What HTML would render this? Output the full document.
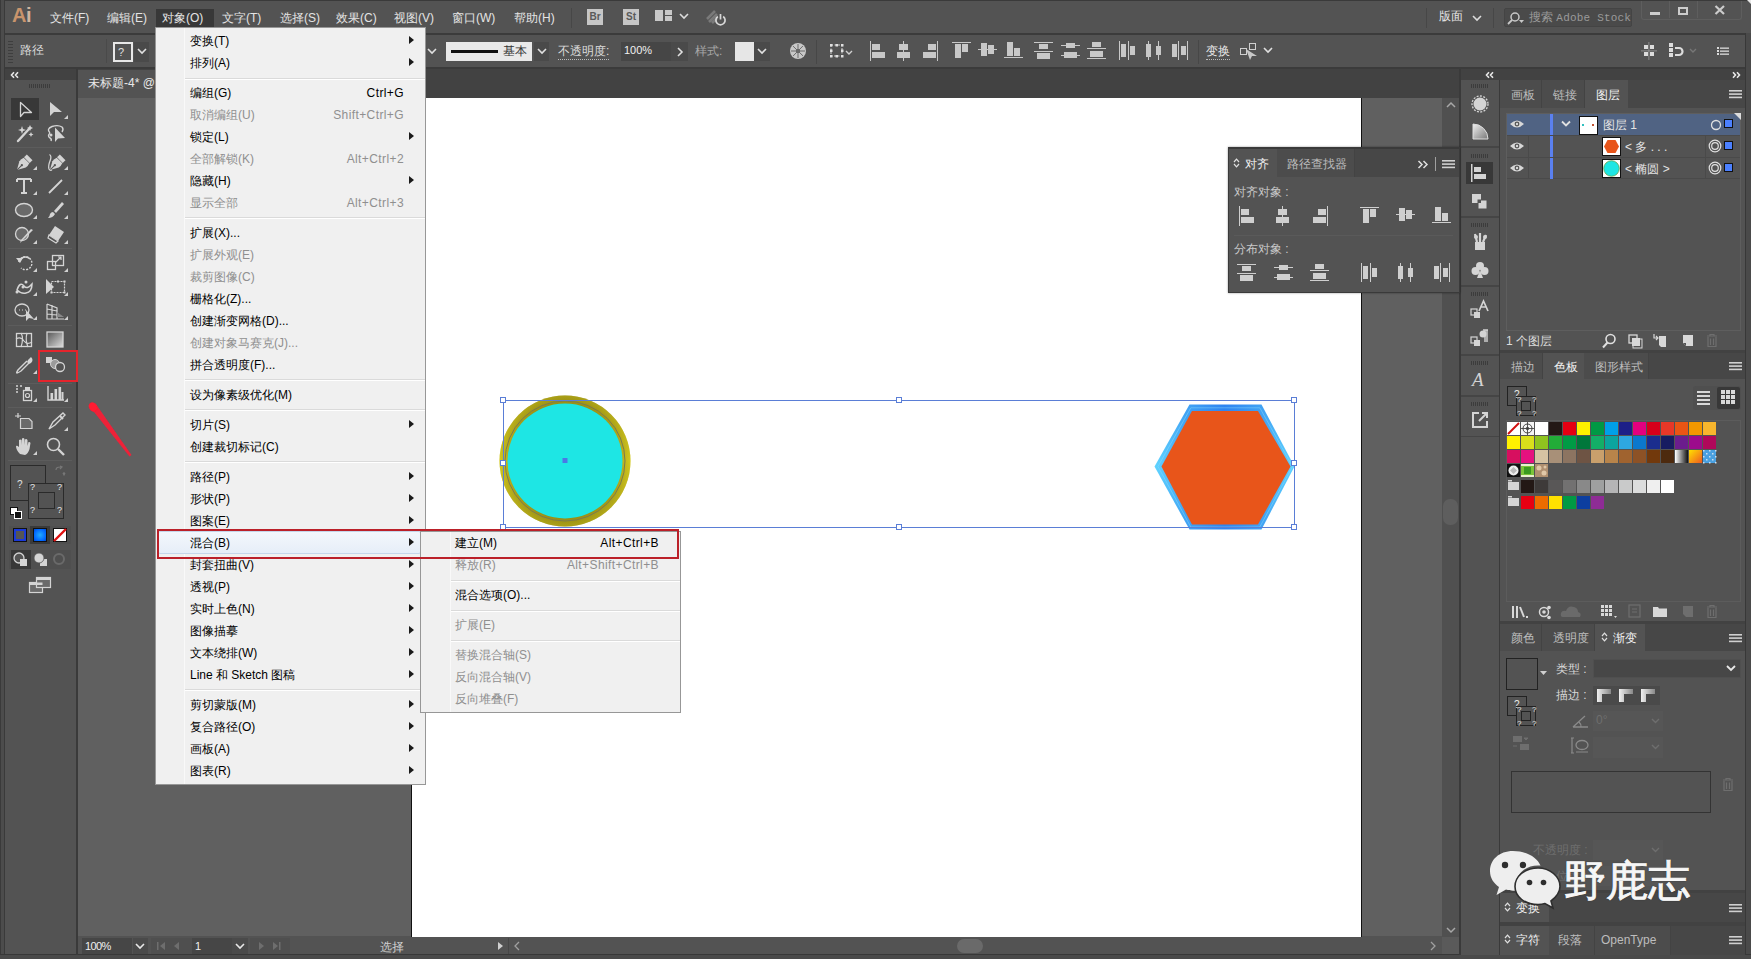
<!DOCTYPE html>
<html><head><meta charset="utf-8"><style>
*{box-sizing:border-box;margin:0;padding:0}
html,body{width:1751px;height:959px;overflow:hidden;background:#535353;font-family:"Liberation Sans",sans-serif;font-size:12px;color:#dcdcdc}
.a{position:absolute}
.t{position:absolute;white-space:nowrap;line-height:14px}
.menu{position:absolute;background:#f0f0f0;border:1px solid #979797;color:#000}
.mi{position:absolute;left:34px;height:22px;line-height:22px;font-size:12px;white-space:nowrap;color:#000}
.dis{color:#8f8f8f}
.sc{position:absolute;text-align:right;height:22px;line-height:22px;white-space:nowrap;letter-spacing:0.4px}
.arr{position:absolute;width:0;height:0;border-top:4px solid transparent;border-bottom:4px solid transparent;border-left:5px solid #1a1a1a}
.sep{position:absolute;height:2px;border-top:1px solid #dadada;border-bottom:1px solid #fff}
svg{position:absolute;overflow:visible}
svg.ud{position:relative;display:inline-block;vertical-align:0px;margin-right:5px}

</style></head><body>
<div class="a" style="left:0px;top:0px;width:1751px;height:959px;background:#535353;"></div>
<div class="a" style="left:0px;top:0px;width:1751px;height:1px;background:#3a3a3a;"></div>
<div class="a" style="left:0px;top:33px;width:1751px;height:2px;background:#3b3b3b;"></div>
<div class="a" style="left:0px;top:67px;width:1751px;height:2px;background:#3b3b3b;"></div>
<div class="a" style="left:0px;top:0px;width:5px;height:959px;background:#4c4c4c;border-left:1px solid #3a3a3a;border-right:1px solid #3a3a3a"></div>
<div class="a" style="left:1745px;top:33px;width:1px;height:922px;background:#383838;"></div>
<div class="a" style="left:1746px;top:33px;width:5px;height:922px;background:#4a4a4a;"></div>
<div class="a" style="left:0px;top:954px;width:1751px;height:1px;background:#383838;"></div>
<div class="a" style="left:0px;top:955px;width:1751px;height:4px;background:#4a4a4a;"></div>
<div class="a" style="left:78px;top:69px;width:1381px;height:29px;background:#424242;"></div>
<div class="a" style="left:78px;top:98px;width:1364px;height:838px;background:#606060;"></div>
<div class="a" style="left:411px;top:98px;width:951px;height:839px;background:#ffffff;border-left:1px solid #111;border-right:1px solid #111"></div>
<div class="a" style="left:1442px;top:98px;width:17px;height:839px;background:#505050;"></div>
<div class="a" style="left:78px;top:937px;width:1381px;height:17px;background:#535353;"></div>
<div class="a" style="left:5px;top:69px;width:71px;height:11px;background:#424242;"></div>
<div class="a" style="left:76px;top:69px;width:2px;height:886px;background:#3a3a3a;"></div>
<div class="a" style="left:1459px;top:69px;width:2px;height:886px;background:#3a3a3a;"></div>
<div class="a" style="left:1461px;top:69px;width:284px;height:11px;background:#424242;"></div>
<div class="a" style="left:1499px;top:80px;width:1px;height:875px;background:#3a3a3a;"></div>
<div class="t" style="left:12px;top:9px;font-size:20px;color:#c8946c;line-height:20px;top:5px;letter-spacing:-0.5px"><b>A</b><b style="color:#d0b4a0">i</b></div>
<div class="a" style="left:156px;top:9px;width:58px;height:18px;background:#383838;"></div>
<div class="t" style="left:50px;top:11px;font-size:12px;color:#e4e4e4;">文件(F)</div>
<div class="t" style="left:107px;top:11px;font-size:12px;color:#e4e4e4;">编辑(E)</div>
<div class="t" style="left:162px;top:11px;font-size:12px;color:#e4e4e4;">对象(O)</div>
<div class="t" style="left:222px;top:11px;font-size:12px;color:#e4e4e4;">文字(T)</div>
<div class="t" style="left:280px;top:11px;font-size:12px;color:#e4e4e4;">选择(S)</div>
<div class="t" style="left:336px;top:11px;font-size:12px;color:#e4e4e4;">效果(C)</div>
<div class="t" style="left:394px;top:11px;font-size:12px;color:#e4e4e4;">视图(V)</div>
<div class="t" style="left:452px;top:11px;font-size:12px;color:#e4e4e4;">窗口(W)</div>
<div class="t" style="left:514px;top:11px;font-size:12px;color:#e4e4e4;">帮助(H)</div>
<div class="a" style="left:571px;top:8px;width:1px;height:20px;background:#474747;"></div>
<div class="a" style="left:587px;top:9px;width:16px;height:16px;background:#c6c6c6;"></div>
<div class="t" style="left:587px;top:10px;font-size:10px;color:#5a5a5a;width:16px;text-align:center"><b>Br</b></div>
<div class="a" style="left:623px;top:9px;width:16px;height:16px;background:#c6c6c6;"></div>
<div class="t" style="left:623px;top:10px;font-size:10px;color:#5a5a5a;width:16px;text-align:center"><b>St</b></div>
<div class="a" style="left:655px;top:10px;width:8px;height:11px;background:#c8c8c8;"></div>
<div class="a" style="left:665px;top:10px;width:7px;height:5px;background:#c8c8c8;"></div>
<div class="a" style="left:665px;top:16px;width:7px;height:5px;background:#c8c8c8;"></div>
<svg style="left:679px;top:13px;" width="10" height="6" viewBox="0 0 10 6"><path d="M1 1 L5 5 L9 1" stroke="#dcdcdc" stroke-width="1.6" fill="none"/></svg>
<svg style="left:704px;top:7px;" width="24" height="20" viewBox="0 0 24 20"><path d="M3 12 L11 4 M5 15 L13 7 M8 16 L13 11" stroke="#7a7a7a" stroke-width="2.6" fill="none"/><path d="M13.8 9.5 A4.6 4.6 0 1 0 19.2 9.5" stroke="#d8d8d8" stroke-width="1.7" fill="none"/><path d="M16.5 7 V12.5" stroke="#d8d8d8" stroke-width="1.7"/></svg>
<div class="a" style="left:1426px;top:8px;width:1px;height:20px;background:#474747;"></div>
<div class="t" style="left:1439px;top:9px;font-size:12px;color:#e4e4e4;">版面</div>
<svg style="left:1472px;top:15px;" width="10" height="6" viewBox="0 0 10 6"><path d="M1 1 L5 5 L9 1" stroke="#dcdcdc" stroke-width="1.6" fill="none"/></svg>
<div class="a" style="left:1493px;top:8px;width:1px;height:20px;background:#474747;"></div>
<div class="a" style="left:1504px;top:8px;width:128px;height:19px;background:#4a4a4a;border:1px solid #444;border-radius:2px"></div>
<svg style="left:1507px;top:11px;" width="18" height="14" viewBox="0 0 18 14"><circle cx="8" cy="6" r="4" stroke="#c8c8c8" stroke-width="1.5" fill="none"/><path d="M5 9 L1 13" stroke="#c8c8c8" stroke-width="1.8"/><path d="M12 9 h5 l-2.5 3z" fill="#c8c8c8"/></svg>
<div class="t" style="left:1529px;top:10px;font-size:12px;color:#9a9a9a;">搜索 <span style="font-family:Liberation Mono;font-size:11px;letter-spacing:0.2px">Adobe Stock</span></div>
<div class="a" style="left:1641px;top:1px;width:101px;height:19px;background:#535353;border:1px solid #5e5e5e;border-top:none;border-radius:0 0 3px 3px"></div>
<div class="a" style="left:1669px;top:1px;width:1px;height:17px;background:#5e5e5e;"></div>
<div class="a" style="left:1697px;top:1px;width:1px;height:17px;background:#5e5e5e;"></div>
<div class="a" style="left:1650px;top:12px;width:10px;height:3px;background:#cccccc;"></div>
<div class="a" style="left:1678px;top:7px;width:10px;height:8px;background:transparent;border:2px solid #cccccc;border-top-width:2px"></div>
<svg style="left:1714px;top:4px;" width="12" height="11" viewBox="0 0 12 11"><path d="M1.5 2 L10 10 M10 2 L1.5 10" stroke="#cccccc" stroke-width="2.2"/></svg>
<svg style="left:1746px;top:0px;" width="5" height="5" viewBox="0 0 5 5"><path d="M1 0 H5 V4Z" fill="#e8e8e8"/></svg>
<svg style="left:8px;top:41px;" width="6" height="22" viewBox="0 0 6 22"><rect x="0" y="0" width="5" height="1" fill="#3e3e3e"/><rect x="0" y="3" width="5" height="1" fill="#3e3e3e"/><rect x="0" y="6" width="5" height="1" fill="#3e3e3e"/><rect x="0" y="9" width="5" height="1" fill="#3e3e3e"/><rect x="0" y="12" width="5" height="1" fill="#3e3e3e"/><rect x="0" y="15" width="5" height="1" fill="#3e3e3e"/><rect x="0" y="18" width="5" height="1" fill="#3e3e3e"/><rect x="0" y="21" width="5" height="1" fill="#3e3e3e"/></svg>
<div class="t" style="left:20px;top:43px;font-size:12px;color:#d8d8d8;">路径</div>
<div class="a" style="left:106px;top:39px;width:1px;height:24px;background:#4a4a4a;"></div>
<div class="a" style="left:113px;top:42px;width:20px;height:20px;background:#535353;border:2px solid #e8e8e8"></div>
<div class="t" style="left:118px;top:45px;font-size:11px;color:#e0e0e0;">?</div>
<div class="a" style="left:134px;top:42px;width:15px;height:20px;background:#4a4a4a;"></div>
<svg style="left:137px;top:48px;" width="10" height="6" viewBox="0 0 10 6"><path d="M1 1 L5 5 L9 1" stroke="#e0e0e0" stroke-width="1.6" fill="none"/></svg>
<svg style="left:427px;top:48px;" width="10" height="6" viewBox="0 0 10 6"><path d="M1 1 L5 5 L9 1" stroke="#e0e0e0" stroke-width="1.6" fill="none"/></svg>
<div class="a" style="left:446px;top:42px;width:86px;height:19px;background:#e9e9e9;"></div>
<div class="a" style="left:451px;top:50px;width:47px;height:3px;background:#111;"></div>
<div class="t" style="left:503px;top:44px;font-size:12px;color:#333;">基本</div>
<div class="a" style="left:534px;top:42px;width:15px;height:19px;background:#4a4a4a;"></div>
<svg style="left:537px;top:48px;" width="10" height="6" viewBox="0 0 10 6"><path d="M1 1 L5 5 L9 1" stroke="#e0e0e0" stroke-width="1.6" fill="none"/></svg>
<div class="t" style="left:558px;top:44px;font-size:12px;color:#dcdcdc;border-bottom:1px dotted #bbb;line-height:15px">不透明度:</div>
<div class="a" style="left:621px;top:42px;width:50px;height:19px;background:#464646;"></div>
<div class="t" style="left:624px;top:43px;font-size:11px;color:#f0f0f0;">100%</div>
<div class="a" style="left:671px;top:42px;width:17px;height:19px;background:#4a4a4a;"></div>
<svg style="left:676px;top:47px;" width="8" height="10" viewBox="0 0 8 10"><path d="M2 1 L6 5 L2 9" stroke="#e0e0e0" stroke-width="1.6" fill="none"/></svg>
<div class="t" style="left:695px;top:44px;font-size:12px;color:#a8a8a8;">样式:</div>
<div class="a" style="left:735px;top:42px;width:19px;height:19px;background:#e6e6e6;"></div>
<div class="a" style="left:754px;top:42px;width:16px;height:19px;background:#4a4a4a;"></div>
<svg style="left:757px;top:48px;" width="10" height="6" viewBox="0 0 10 6"><path d="M1 1 L5 5 L9 1" stroke="#e0e0e0" stroke-width="1.6" fill="none"/></svg>
<svg style="left:789px;top:42px;" width="18" height="18" viewBox="0 0 18 18"><circle cx="9" cy="9" r="8" fill="#c8c8c8"/><circle cx="9" cy="9" r="2" fill="#535353"/><path d="M9 9 L16.0 9.0" stroke="#6a6a6a" stroke-width="1"/><path d="M9 9 L14.0 13.9" stroke="#6a6a6a" stroke-width="1"/><path d="M9 9 L9.0 16.0" stroke="#6a6a6a" stroke-width="1"/><path d="M9 9 L4.1 14.0" stroke="#6a6a6a" stroke-width="1"/><path d="M9 9 L2.0 9.0" stroke="#6a6a6a" stroke-width="1"/><path d="M9 9 L4.0 4.1" stroke="#6a6a6a" stroke-width="1"/><path d="M9 9 L9.0 2.0" stroke="#6a6a6a" stroke-width="1"/><path d="M9 9 L13.9 4.0" stroke="#6a6a6a" stroke-width="1"/></svg>
<div class="a" style="left:816px;top:40px;width:1px;height:24px;background:#474747;"></div>
<svg style="left:829px;top:43px;" width="26" height="16" viewBox="0 0 26 16"><rect x="2" y="2" width="11" height="11" stroke="#d0d0d0" stroke-dasharray="2 1.5" fill="none"/><rect x="1" y="1" width="2.5" height="2.5" fill="#e0e0e0"/><rect x="1" y="6.5" width="2.5" height="2.5" fill="#e0e0e0"/><rect x="1" y="12" width="2.5" height="2.5" fill="#e0e0e0"/><rect x="6.5" y="1" width="2.5" height="2.5" fill="#e0e0e0"/><rect x="6.5" y="12" width="2.5" height="2.5" fill="#e0e0e0"/><rect x="12" y="1" width="2.5" height="2.5" fill="#e0e0e0"/><rect x="12" y="6.5" width="2.5" height="2.5" fill="#e0e0e0"/><rect x="12" y="12" width="2.5" height="2.5" fill="#e0e0e0"/><path d="M17 8 L20 11 L23 8" stroke="#d0d0d0" stroke-width="1.4" fill="none"/></svg>
<svg style="left:869px;top:41px;" width="20" height="20" viewBox="0 0 20 20"><rect x="1" y="0" width="1" height="20" fill="#c8c8c8"/><rect x="3" y="3" width="8" height="6" fill="#c8c8c8"/><rect x="3" y="11" width="13" height="6" fill="#c8c8c8"/></svg>
<svg style="left:894px;top:41px;" width="20" height="20" viewBox="0 0 20 20"><rect x="9" y="0" width="1" height="20" fill="#c8c8c8"/><rect x="5" y="3" width="9" height="6" fill="#c8c8c8"/><rect x="3" y="11" width="13" height="6" fill="#c8c8c8"/></svg>
<svg style="left:920px;top:41px;" width="20" height="20" viewBox="0 0 20 20"><rect x="17" y="0" width="1" height="20" fill="#c8c8c8"/><rect x="8" y="3" width="8" height="6" fill="#c8c8c8"/><rect x="3" y="11" width="13" height="6" fill="#c8c8c8"/></svg>
<svg style="left:952px;top:41px;" width="20" height="20" viewBox="0 0 20 20"><rect x="0" y="1" width="19" height="1" fill="#c8c8c8"/><rect x="3" y="3" width="6" height="14" fill="#c8c8c8"/><rect x="10" y="3" width="6" height="8" fill="#c8c8c8"/></svg>
<svg style="left:978px;top:41px;" width="20" height="20" viewBox="0 0 20 20"><rect x="0" y="8" width="19" height="1" fill="#c8c8c8"/><rect x="3" y="2" width="6" height="13" fill="#c8c8c8"/><rect x="10" y="4" width="6" height="9" fill="#c8c8c8"/></svg>
<svg style="left:1004px;top:41px;" width="20" height="20" viewBox="0 0 20 20"><rect x="0" y="16" width="19" height="1" fill="#c8c8c8"/><rect x="3" y="1" width="6" height="14" fill="#c8c8c8"/><rect x="10" y="7" width="6" height="8" fill="#c8c8c8"/></svg>
<svg style="left:1034px;top:41px;" width="20" height="20" viewBox="0 0 20 20"><rect x="0" y="1" width="19" height="1" fill="#c8c8c8"/><rect x="0" y="10" width="19" height="1" fill="#c8c8c8"/><rect x="5" y="3" width="9" height="5" fill="#c8c8c8"/><rect x="3" y="12" width="13" height="6" fill="#c8c8c8"/></svg>
<svg style="left:1061px;top:41px;" width="20" height="20" viewBox="0 0 20 20"><rect x="0" y="4" width="19" height="1" fill="#c8c8c8"/><rect x="0" y="14" width="19" height="1" fill="#c8c8c8"/><rect x="5" y="2" width="9" height="5" fill="#c8c8c8"/><rect x="3" y="11" width="13" height="6" fill="#c8c8c8"/></svg>
<svg style="left:1087px;top:41px;" width="20" height="20" viewBox="0 0 20 20"><rect x="0" y="7" width="19" height="1" fill="#c8c8c8"/><rect x="0" y="17" width="19" height="1" fill="#c8c8c8"/><rect x="5" y="1" width="9" height="5" fill="#c8c8c8"/><rect x="3" y="10" width="13" height="6" fill="#c8c8c8"/></svg>
<svg style="left:1118px;top:41px;" width="20" height="20" viewBox="0 0 20 20"><rect x="1" y="0" width="1" height="19" fill="#c8c8c8"/><rect x="10" y="0" width="1" height="19" fill="#c8c8c8"/><rect x="3" y="3" width="5" height="13" fill="#c8c8c8"/><rect x="12" y="5" width="5" height="9" fill="#c8c8c8"/></svg>
<svg style="left:1144px;top:41px;" width="20" height="20" viewBox="0 0 20 20"><rect x="4" y="0" width="1" height="19" fill="#c8c8c8"/><rect x="14" y="0" width="1" height="19" fill="#c8c8c8"/><rect x="2" y="3" width="5" height="13" fill="#c8c8c8"/><rect x="12" y="5" width="5" height="9" fill="#c8c8c8"/></svg>
<svg style="left:1170px;top:41px;" width="20" height="20" viewBox="0 0 20 20"><rect x="8" y="0" width="1" height="19" fill="#c8c8c8"/><rect x="17" y="0" width="1" height="19" fill="#c8c8c8"/><rect x="2" y="3" width="5" height="13" fill="#c8c8c8"/><rect x="11" y="5" width="5" height="9" fill="#c8c8c8"/></svg>
<div class="a" style="left:1198px;top:40px;width:1px;height:24px;background:#474747;"></div>
<div class="t" style="left:1206px;top:44px;font-size:12px;color:#e8e8e8;border-bottom:1px dotted #bbb;line-height:15px">变换</div>
<svg style="left:1239px;top:42px;" width="22" height="18" viewBox="0 0 22 18"><rect x="1.5" y="6.5" width="6" height="6" stroke="#d0d0d0" fill="none"/><rect x="10.5" y="1.5" width="6" height="6" stroke="#d0d0d0" fill="none"/><path d="M7 7 L18 14 L13 14 L11 18 Z" fill="#c8c8c8"/></svg>
<svg style="left:1263px;top:47px;" width="10" height="6" viewBox="0 0 10 6"><path d="M1 1 L5 5 L9 1" stroke="#e0e0e0" stroke-width="1.6" fill="none"/></svg>
<svg style="left:1641px;top:42px;" width="16" height="18" viewBox="0 0 16 18"><rect x="7.5" y="0" width="0.8" height="18" fill="#9a9a9a"/><rect x="0" y="8.5" width="16" height="0.8" fill="#9a9a9a"/><rect x="3" y="3" width="4" height="4" fill="#dcdcdc"/><rect x="9" y="3" width="4" height="4" fill="#dcdcdc"/><rect x="3" y="10" width="4" height="4" fill="#dcdcdc"/><rect x="9" y="10" width="4" height="4" fill="#dcdcdc"/></svg>
<svg style="left:1668px;top:43px;" width="18" height="16" viewBox="0 0 18 16"><rect x="1" y="0" width="4" height="4" fill="#dcdcdc"/><rect x="1" y="5" width="4" height="4" fill="#dcdcdc"/><rect x="1" y="10" width="4" height="4" fill="#dcdcdc"/><path d="M7 5 H11 A3.5 3.5 0 0 1 11 12 H7" stroke="#dcdcdc" stroke-width="2.2" fill="none"/></svg>
<svg style="left:1689px;top:48px;" width="8" height="6" viewBox="0 0 8 6"><path d="M1 1 L4 4 L7 1" stroke="#777" stroke-width="1.4" fill="none"/></svg>
<svg style="left:1717px;top:46px;" width="13" height="10" viewBox="0 0 13 10"><rect x="0" y="1" width="2" height="2" fill="#dcdcdc"/><rect x="3" y="1.5" width="9" height="1.3" fill="#dcdcdc"/><rect x="0" y="4" width="2" height="2" fill="#dcdcdc"/><rect x="3" y="4.5" width="9" height="1.3" fill="#dcdcdc"/><rect x="0" y="7" width="2" height="2" fill="#dcdcdc"/><rect x="3" y="7.5" width="9" height="1.3" fill="#dcdcdc"/></svg>
<div class="a" style="left:78px;top:69px;width:1381px;height:29px;background:#424242;"></div>
<div class="a" style="left:78px;top:70px;width:300px;height:28px;background:#535353;"></div>
<div class="t" style="left:88px;top:76px;font-size:12px;color:#e8e8e8;">未标题-4* @ 100% (RGB/GPU 预览)</div>
<svg style="left:490px;top:385px;" width="160" height="160" viewBox="0 0 160 160">
<defs>
<linearGradient id="ring" x1="0" y1="0" x2="0" y2="1">
<stop offset="0" stop-color="#857a12"/><stop offset="0.5" stop-color="#cfc520"/><stop offset="1" stop-color="#857a12"/></linearGradient>
<radialGradient id="ring2" cx="0.5" cy="0.5" r="0.5">
<stop offset="0.86" stop-color="#a09214"/><stop offset="1" stop-color="#d8cf1e"/></radialGradient>
</defs>
<circle cx="75" cy="76" r="65.5" fill="url(#ring)"/>
<circle cx="75" cy="76" r="65.5" fill="url(#ring2)" opacity="0.45"/>
<circle cx="75" cy="76" r="60" fill="none" stroke="#7a7a50" stroke-width="1"/>
<circle cx="75" cy="76" r="57.5" fill="#1ee6e4"/>
<rect x="72.5" y="73" width="5" height="5" fill="#4a78e6"/>
</svg>
<svg style="left:1145px;top:390px;" width="160" height="150" viewBox="0 0 160 150">
<defs><linearGradient id="hx" x1="0" y1="0" x2="1" y2="0">
<stop offset="0" stop-color="#60d4ff"/><stop offset="0.22" stop-color="#42a4f4"/><stop offset="0.5" stop-color="#2f84f0"/><stop offset="0.78" stop-color="#42a4f4"/><stop offset="1" stop-color="#60d4ff"/></linearGradient></defs>
<polygon points="9.5,76.5 44.5,14.5 116.5,14.5 149.5,76.5 116.5,139.5 44.5,139.5" fill="url(#hx)"/>
<polygon points="16.5,76.5 47,21 113,21 145.5,76.5 113,134.5 47,134.5" fill="#e8551a"/><polygon points="13,76.5 45.8,17.8 114.8,17.8 147.5,76.5 114.8,137 45.8,137" fill="none" stroke="#8ee0ff" stroke-width="0.8" opacity="0.55"/>
</svg>
<div class="a" style="left:503px;top:400px;width:792px;height:128px;border:1px solid #5a7ed6"></div>
<div class="a" style="left:500px;top:397px;width:6px;height:6px;background:#fff;border:1px solid #5a7ed6"></div>
<div class="a" style="left:500px;top:460px;width:6px;height:6px;background:#fff;border:1px solid #5a7ed6"></div>
<div class="a" style="left:500px;top:524px;width:6px;height:6px;background:#fff;border:1px solid #5a7ed6"></div>
<div class="a" style="left:896px;top:397px;width:6px;height:6px;background:#fff;border:1px solid #5a7ed6"></div>
<div class="a" style="left:896px;top:524px;width:6px;height:6px;background:#fff;border:1px solid #5a7ed6"></div>
<div class="a" style="left:1291px;top:397px;width:6px;height:6px;background:#fff;border:1px solid #5a7ed6"></div>
<div class="a" style="left:1291px;top:460px;width:6px;height:6px;background:#fff;border:1px solid #5a7ed6"></div>
<div class="a" style="left:1291px;top:524px;width:6px;height:6px;background:#fff;border:1px solid #5a7ed6"></div>
<svg style="left:1445px;top:100px;" width="12" height="10" viewBox="0 0 12 10"><path d="M2 7 L6 3 L10 7" stroke="#a8a8a8" stroke-width="1.5" fill="none"/></svg>
<svg style="left:1445px;top:925px;" width="12" height="10" viewBox="0 0 12 10"><path d="M2 3 L6 7 L10 3" stroke="#a8a8a8" stroke-width="1.5" fill="none"/></svg>
<div class="a" style="left:1443px;top:499px;width:15px;height:26px;background:#5e5e5e;border-radius:7px"></div>
<div class="a" style="left:1442px;top:937px;width:17px;height:17px;background:#5a5a5a;"></div>
<div class="a" style="left:78px;top:937px;width:1364px;height:17px;background:#535353;"></div>
<div class="a" style="left:82px;top:938px;width:50px;height:16px;background:#464646;"></div>
<div class="t" style="left:85px;top:939px;font-size:11px;color:#f0f0f0;letter-spacing:-0.6px">100%</div>
<div class="a" style="left:133px;top:938px;width:15px;height:16px;background:#4a4a4a;"></div>
<svg style="left:135px;top:943px;" width="10" height="6" viewBox="0 0 10 6"><path d="M1 1 L5 5 L9 1" stroke="#e8e8e8" stroke-width="1.6" fill="none"/></svg>
<div class="a" style="left:151px;top:938px;width:41px;height:16px;background:#4f4f4f;"></div>
<svg style="left:157px;top:941px;" width="30" height="10" viewBox="0 0 30 10"><rect x="0" y="1" width="1.5" height="8" fill="#6e6e6e"/><path d="M8 1 L3 5 L8 9Z" fill="#6e6e6e"/><path d="M22 1 L17 5 L22 9Z" fill="#6e6e6e"/></svg>
<div class="a" style="left:192px;top:938px;width:40px;height:16px;background:#464646;"></div>
<div class="t" style="left:195px;top:939px;font-size:11px;color:#f0f0f0;">1</div>
<div class="a" style="left:232px;top:938px;width:16px;height:16px;background:#4a4a4a;"></div>
<svg style="left:235px;top:943px;" width="10" height="6" viewBox="0 0 10 6"><path d="M1 1 L5 5 L9 1" stroke="#e8e8e8" stroke-width="1.6" fill="none"/></svg>
<div class="a" style="left:250px;top:938px;width:40px;height:16px;background:#4f4f4f;"></div>
<svg style="left:257px;top:941px;" width="30" height="10" viewBox="0 0 30 10"><path d="M2 1 L7 5 L2 9Z" fill="#6e6e6e"/><path d="M16 1 L21 5 L16 9Z" fill="#6e6e6e"/><rect x="22" y="1" width="1.5" height="8" fill="#6e6e6e"/></svg>
<div class="t" style="left:380px;top:940px;font-size:12px;color:#d0d0d0;">选择</div>
<svg style="left:497px;top:941px;" width="8" height="10" viewBox="0 0 8 10"><path d="M1 1 L6 5 L1 9Z" fill="#d0d0d0"/></svg>
<div class="a" style="left:508px;top:938px;width:1px;height:16px;background:#474747;"></div>
<svg style="left:513px;top:941px;" width="8" height="10" viewBox="0 0 8 10"><path d="M6 1 L2 5 L6 9" stroke="#a0a0a0" stroke-width="1.3" fill="none"/></svg>
<div class="a" style="left:957px;top:939px;width:26px;height:14px;background:#6a6a6a;border-radius:7px"></div>
<svg style="left:1429px;top:941px;" width="8" height="10" viewBox="0 0 8 10"><path d="M2 1 L6 5 L2 9" stroke="#a0a0a0" stroke-width="1.3" fill="none"/></svg>
<svg style="left:10px;top:71px;" width="9" height="8" viewBox="0 0 9 8"><path d="M4 1.2 L1.5 4 L4 6.8 M8 1.2 L5.5 4 L8 6.8" stroke="#e8e8e8" stroke-width="1.6" fill="none"/></svg>
<svg style="left:29px;top:84px;" width="22" height="4" viewBox="0 0 22 4"><rect x="0" y="0" width="1" height="4" fill="#3c3c3c"/><rect x="2" y="0" width="1" height="4" fill="#3c3c3c"/><rect x="4" y="0" width="1" height="4" fill="#3c3c3c"/><rect x="6" y="0" width="1" height="4" fill="#3c3c3c"/><rect x="8" y="0" width="1" height="4" fill="#3c3c3c"/><rect x="10" y="0" width="1" height="4" fill="#3c3c3c"/><rect x="12" y="0" width="1" height="4" fill="#3c3c3c"/><rect x="14" y="0" width="1" height="4" fill="#3c3c3c"/><rect x="16" y="0" width="1" height="4" fill="#3c3c3c"/><rect x="18" y="0" width="1" height="4" fill="#3c3c3c"/><rect x="20" y="0" width="1" height="4" fill="#3c3c3c"/></svg>
<div class="a" style="left:11px;top:98px;width:28px;height:22px;background:#383838;"></div>
<svg style="left:18px;top:101px;" width="16" height="18" viewBox="0 0 16 18"><path d="M2.5 1.5 L2.5 15.5 L6 11.5 L13.5 11.5Z" stroke="#d4d4d4" stroke-width="1.3" fill="none" stroke-linejoin="round"/></svg>
<svg style="left:48px;top:101px;" width="18" height="18" viewBox="0 0 18 18"><path d="M2 1 L2 15 L6 11 L14 11Z" fill="#d4d4d4"/></svg>
<svg style="left:64px;top:115px;" width="5" height="5" viewBox="0 0 5 5"><path d="M4 0 L4 4 L0 4Z" fill="#d0d0d0"/></svg>
<svg style="left:14px;top:124px;" width="22" height="20" viewBox="0 0 22 20"><path d="M4 17 L15 5" stroke="#d4d4d4" stroke-width="2.4" stroke-linecap="round"/><path d="M8 2 L9 5 L12 6 L9 7 L8 10 L7 7 L4 6 L7 5Z M16 1 L17 3 L19 4 L17 5 L16 7 L15 5 L13 4 L15 3Z M17 8 L17.8 9.7 L19.5 10.5 L17.8 11.3 L17 13 L16.2 11.3 L14.5 10.5 L16.2 9.7Z" fill="#d4d4d4"/></svg>
<svg style="left:45px;top:124px;" width="22" height="20" viewBox="0 0 22 20"><path d="M5 9 Q1 5 7 2.5 Q13 0.5 17 3 Q19 5 17 8" stroke="#d4d4d4" stroke-width="1.4" fill="none"/><path d="M5 9 Q2 12 5 14 Q7 15 6 17" stroke="#d4d4d4" stroke-width="1.4" fill="none"/><circle cx="6" cy="11" r="1.5" fill="#d4d4d4"/><path d="M10 3.5 L10 18 L13 14.5 L20 14Z" fill="#d4d4d4"/></svg>
<div class="a" style="left:8px;top:147px;width:64px;height:1px;background:#4a4a4a;border-bottom:1px solid #5c5c5c"></div>
<svg style="left:13px;top:153px;" width="22" height="22" viewBox="0 0 22 22"><g transform="translate(11 10) rotate(45)"><path d="M0 10 L-4.5 2 Q-5 -1 -4 -3.5 L4 -3.5 Q5 -1 4.5 2Z" fill="#d4d4d4"/><rect x="-4" y="-8" width="8" height="4" fill="#d4d4d4"/><path d="M0 10 L0 3" stroke="#535353" stroke-width="1"/><circle cx="0" cy="3" r="1.1" fill="#535353"/></g></svg>
<svg style="left:33px;top:166px;" width="5" height="5" viewBox="0 0 5 5"><path d="M4 0 L4 4 L0 4Z" fill="#d0d0d0"/></svg>
<svg style="left:44px;top:153px;" width="22" height="22" viewBox="0 0 22 22"><g transform="translate(13 10) rotate(45)"><path d="M0 10 L-4.5 2 Q-5 -1 -4 -3.5 L4 -3.5 Q5 -1 4.5 2Z" fill="#d4d4d4"/><rect x="-4" y="-8" width="8" height="4" fill="#d4d4d4"/><path d="M0 10 L0 3" stroke="#535353" stroke-width="1"/><circle cx="0" cy="3" r="1.1" fill="#535353"/></g><path d="M5.5 1.5 Q8 3 6 8 Q4 13 5 16 Q6 18 8 17" stroke="#d4d4d4" stroke-width="1.3" fill="none"/></svg>
<svg style="left:64px;top:166px;" width="5" height="5" viewBox="0 0 5 5"><path d="M4 0 L4 4 L0 4Z" fill="#d0d0d0"/></svg>
<svg style="left:15px;top:177px;" width="20" height="18" viewBox="0 0 20 18"><path d="M2 2 H16 M9 2 V16 M6 16 H12 M2 2 V5 M16 2 V5" stroke="#d4d4d4" stroke-width="2" fill="none"/></svg>
<svg style="left:33px;top:191px;" width="5" height="5" viewBox="0 0 5 5"><path d="M4 0 L4 4 L0 4Z" fill="#d0d0d0"/></svg>
<svg style="left:46px;top:177px;" width="20" height="18" viewBox="0 0 20 18"><path d="M3 16 L16 3" stroke="#d4d4d4" stroke-width="1.8"/></svg>
<svg style="left:64px;top:191px;" width="5" height="5" viewBox="0 0 5 5"><path d="M4 0 L4 4 L0 4Z" fill="#d0d0d0"/></svg>
<svg style="left:14px;top:201px;" width="22" height="18" viewBox="0 0 22 18"><ellipse cx="10" cy="9" rx="8.5" ry="6.5" fill="#6a6a6a" stroke="#d4d4d4" stroke-width="1.4"/></svg>
<svg style="left:33px;top:215px;" width="5" height="5" viewBox="0 0 5 5"><path d="M4 0 L4 4 L0 4Z" fill="#d0d0d0"/></svg>
<svg style="left:45px;top:201px;" width="22" height="18" viewBox="0 0 22 18"><path d="M17 1 L19 3 L11 12 L9 10Z" fill="#d4d4d4"/><path d="M8 11 L10 13 Q8 17 3 17 Q5 15 5 13 Q6 11 8 11Z" fill="#d4d4d4"/></svg>
<svg style="left:64px;top:215px;" width="5" height="5" viewBox="0 0 5 5"><path d="M4 0 L4 4 L0 4Z" fill="#d0d0d0"/></svg>
<svg style="left:14px;top:225px;" width="22" height="20" viewBox="0 0 22 20"><circle cx="8" cy="9" r="6.5" fill="#6a6a6a" stroke="#d4d4d4" stroke-width="1.3"/><path d="M19 5 L8 16 L6 18 L7 15 L17 4Z" fill="#d4d4d4"/></svg>
<svg style="left:33px;top:240px;" width="5" height="5" viewBox="0 0 5 5"><path d="M4 0 L4 4 L0 4Z" fill="#d0d0d0"/></svg>
<svg style="left:45px;top:224px;" width="22" height="20" viewBox="0 0 22 20"><path d="M10 2 L19 8 L13 17 L4 11Z" fill="#d4d4d4"/><path d="M4 11 L13 17 L11 19 L3 14Z" fill="#535353" stroke="#d4d4d4" stroke-width="1.2"/></svg>
<svg style="left:64px;top:240px;" width="5" height="5" viewBox="0 0 5 5"><path d="M4 0 L4 4 L0 4Z" fill="#d0d0d0"/></svg>
<div class="a" style="left:8px;top:248px;width:64px;height:1px;background:#4a4a4a;border-bottom:1px solid #5c5c5c"></div>
<svg style="left:15px;top:254px;" width="20" height="18" viewBox="0 0 20 18"><path d="M4 8 A6.5 6.5 0 1 1 6 14" stroke="#d4d4d4" stroke-width="1.4" fill="none" stroke-dasharray="2 1.3"/><path d="M4 8 A6.5 6.5 0 0 1 15 5" stroke="#d4d4d4" stroke-width="1.6" fill="none"/><path d="M1 4 L5 9 L8 4Z" fill="#d4d4d4"/></svg>
<svg style="left:33px;top:268px;" width="5" height="5" viewBox="0 0 5 5"><path d="M4 0 L4 4 L0 4Z" fill="#d0d0d0"/></svg>
<svg style="left:45px;top:253px;" width="22" height="20" viewBox="0 0 22 20"><rect x="2.5" y="8.5" width="8" height="8" stroke="#d4d4d4" stroke-width="1.3" fill="none"/><rect x="7.5" y="2.5" width="11" height="10" stroke="#d4d4d4" stroke-width="1.3" fill="none"/><path d="M11 9 L16 4 M13 4 H16 V7" stroke="#d4d4d4" stroke-width="1.2" fill="none"/></svg>
<svg style="left:64px;top:268px;" width="5" height="5" viewBox="0 0 5 5"><path d="M4 0 L4 4 L0 4Z" fill="#d0d0d0"/></svg>
<svg style="left:14px;top:278px;" width="22" height="18" viewBox="0 0 22 18"><path d="M3 12 Q6 3 10 8 Q13 12 18 6 Q18 14 12 15 Q7 16 3 12Z" fill="none" stroke="#d4d4d4" stroke-width="1.5"/><circle cx="3" cy="14" r="1.5" fill="#d4d4d4"/><circle cx="9" cy="9" r="1.5" fill="#d4d4d4"/><circle cx="12" cy="4" r="1.5" fill="#d4d4d4"/></svg>
<svg style="left:33px;top:292px;" width="5" height="5" viewBox="0 0 5 5"><path d="M4 0 L4 4 L0 4Z" fill="#d0d0d0"/></svg>
<svg style="left:45px;top:277px;" width="22" height="20" viewBox="0 0 22 20"><rect x="6.5" y="4.5" width="13" height="11" stroke="#d4d4d4" stroke-width="1.2" fill="none" stroke-dasharray="2 1"/><path d="M1 2 L1 17 L9 10Z" fill="#d4d4d4"/><rect x="18.5" y="3.5" width="2" height="2" fill="#d4d4d4"/><rect x="18.5" y="14.5" width="2" height="2" fill="#d4d4d4"/><rect x="5.5" y="14.5" width="2" height="2" fill="#d4d4d4"/><rect x="12" y="3.5" width="2" height="2" fill="#d4d4d4"/></svg>
<svg style="left:64px;top:292px;" width="5" height="5" viewBox="0 0 5 5"><path d="M4 0 L4 4 L0 4Z" fill="#d0d0d0"/></svg>
<svg style="left:14px;top:302px;" width="22" height="20" viewBox="0 0 22 20"><ellipse cx="8" cy="8" rx="7" ry="6" stroke="#d4d4d4" stroke-width="1.3" fill="none"/><path d="M5 8 h1 M8 8 h1 M11 8 h1" stroke="#d4d4d4" stroke-width="1.2"/><path d="M12 8 L12 19 L15 16 L20 17Z" fill="#d4d4d4"/></svg>
<svg style="left:33px;top:316px;" width="5" height="5" viewBox="0 0 5 5"><path d="M4 0 L4 4 L0 4Z" fill="#d0d0d0"/></svg>
<svg style="left:45px;top:302px;" width="22" height="20" viewBox="0 0 22 20"><path d="M2 2 L2 17 L19 17 M2 2 L12 6 L12 17 M2 7 L12 9 M2 12 L12 13 M7 3 L7 17" stroke="#d4d4d4" stroke-width="1.2" fill="none"/><path d="M12 10 L19 15 L12 15Z" fill="#888"/></svg>
<svg style="left:64px;top:316px;" width="5" height="5" viewBox="0 0 5 5"><path d="M4 0 L4 4 L0 4Z" fill="#d0d0d0"/></svg>
<div class="a" style="left:8px;top:325px;width:64px;height:1px;background:#4a4a4a;border-bottom:1px solid #5c5c5c"></div>
<svg style="left:15px;top:332px;" width="20" height="17" viewBox="0 0 20 17"><rect x="1.5" y="1.5" width="15" height="13" stroke="#d4d4d4" stroke-width="1.3" fill="none"/><path d="M1 7 Q6 4 9 9 Q12 13 17 10 M6 1 Q9 6 6 15 M12 1 Q10 8 13 15" stroke="#d4d4d4" stroke-width="1.2" fill="none"/></svg>
<svg style="left:46px;top:331px;" width="18" height="17" viewBox="0 0 18 17"><defs><linearGradient id="tg" x1="0" y1="0" x2="1" y2="1"><stop offset="0" stop-color="#555"/><stop offset="1" stop-color="#ddd"/></linearGradient></defs><rect x="1" y="1" width="16" height="15" fill="url(#tg)" stroke="#d4d4d4" stroke-width="1.3"/></svg>
<svg style="left:14px;top:355px;" width="22" height="19" viewBox="0 0 22 19"><path d="M17 2 Q20 5 17 8 L15 9 L13 7 L14 5Z" fill="#d4d4d4"/><path d="M13 6 L4 15 Q2 18 3 18 Q4 18 7 16 L15 8" stroke="#d4d4d4" stroke-width="1.4" fill="none"/></svg>
<svg style="left:33px;top:370px;" width="5" height="5" viewBox="0 0 5 5"><path d="M4 0 L4 4 L0 4Z" fill="#d0d0d0"/></svg>
<svg style="left:45px;top:355px;" width="22" height="18" viewBox="0 0 22 18"><rect x="1" y="2" width="6" height="6" fill="#d4d4d4"/><circle cx="10" cy="9" r="4.5" fill="#9a9a9a" stroke="#d4d4d4" stroke-width="1"/><circle cx="15" cy="12" r="4.5" fill="#535353" stroke="#d4d4d4" stroke-width="1.3"/></svg>
<div class="a" style="left:8px;top:383px;width:64px;height:1px;background:#4a4a4a;border-bottom:1px solid #5c5c5c"></div>
<svg style="left:14px;top:384px;" width="22" height="18" viewBox="0 0 22 18"><path d="M2 2 h2 M6 2 h2 M2 5 h2 M6 5 h0 M2 8 h2" stroke="#d4d4d4" stroke-width="1.6"/><rect x="9.5" y="6.5" width="8" height="10" stroke="#d4d4d4" stroke-width="1.3" fill="none"/><rect x="11" y="3" width="5" height="3" fill="#d4d4d4"/><circle cx="13.5" cy="11.5" r="2" stroke="#d4d4d4" stroke-width="1.2" fill="none"/></svg>
<svg style="left:33px;top:398px;" width="5" height="5" viewBox="0 0 5 5"><path d="M4 0 L4 4 L0 4Z" fill="#d0d0d0"/></svg>
<svg style="left:46px;top:384px;" width="20" height="18" viewBox="0 0 20 18"><path d="M2 2 V16 H18" stroke="#d4d4d4" stroke-width="1.4" fill="none"/><rect x="4.5" y="9" width="2.6" height="7" fill="#d4d4d4"/><rect x="8.5" y="5" width="2.6" height="11" fill="#d4d4d4"/><rect x="12.5" y="3" width="2.6" height="13" fill="#d4d4d4"/><rect x="15.5" y="8" width="2" height="8" fill="#d4d4d4"/></svg>
<svg style="left:64px;top:398px;" width="5" height="5" viewBox="0 0 5 5"><path d="M4 0 L4 4 L0 4Z" fill="#d0d0d0"/></svg>
<div class="a" style="left:8px;top:407px;width:64px;height:1px;background:#4a4a4a;border-bottom:1px solid #5c5c5c"></div>
<svg style="left:14px;top:412px;" width="22" height="18" viewBox="0 0 22 18"><path d="M4 1 V6 M1 4 H7" stroke="#d4d4d4" stroke-width="1.2"/><path d="M6.5 6.5 H15 L18 9.5 V16.5 H6.5Z" fill="#6a6a6a" stroke="#d4d4d4" stroke-width="1.2"/></svg>
<svg style="left:45px;top:412px;" width="22" height="18" viewBox="0 0 22 18"><path d="M18 1 L20 3 L10 13 L4 17 L8 10Z" fill="none" stroke="#d4d4d4" stroke-width="1.4"/><path d="M15 4 L18 7" stroke="#d4d4d4" stroke-width="2"/></svg>
<svg style="left:64px;top:427px;" width="5" height="5" viewBox="0 0 5 5"><path d="M4 0 L4 4 L0 4Z" fill="#d0d0d0"/></svg>
<svg style="left:14px;top:437px;" width="22" height="19" viewBox="0 0 22 19"><path d="M6 17 Q2 13 2 9 Q3 8 5 10 L5 3 Q6.5 2 7.5 3 L7.5 8 L8 1.5 Q9.5 0.5 10.5 2 L10.5 8 L11 2.5 Q12.5 1.5 13.5 3 L13.5 9 L14.5 5 Q16 4.5 16.5 6 L15.5 12 Q14 17 11 18Z" fill="#d4d4d4"/></svg>
<svg style="left:33px;top:451px;" width="5" height="5" viewBox="0 0 5 5"><path d="M4 0 L4 4 L0 4Z" fill="#d0d0d0"/></svg>
<svg style="left:45px;top:437px;" width="22" height="19" viewBox="0 0 22 19"><circle cx="8.5" cy="7.5" r="6" stroke="#d4d4d4" stroke-width="1.6" fill="none"/><path d="M13 12 L19 18" stroke="#d4d4d4" stroke-width="2.4"/></svg>
<div class="a" style="left:8px;top:460px;width:64px;height:1px;background:#4a4a4a;border-bottom:1px solid #5c5c5c"></div>
<div class="a" style="left:10px;top:465px;width:36px;height:36px;background:#535353;border:1px solid #2a2a2a"></div>
<svg style="left:17px;top:480px;" width="8" height="10" viewBox="0 0 8 10"><text x="0" y="8" font-size="10" fill="#e0e0e0" font-family="Liberation Sans">?</text></svg>
<div class="a" style="left:28px;top:483px;width:36px;height:36px;background:#535353;border:1px solid #2a2a2a"></div>
<div class="a" style="left:38px;top:492px;width:17px;height:17px;background:#535353;border:1px solid #2a2a2a"></div>
<div class="t" style="left:30px;top:480px;font-size:9px;color:#e8e8e8">?</div>
<div class="t" style="left:57px;top:480px;font-size:9px;color:#e8e8e8">?</div>
<div class="t" style="left:30px;top:503px;font-size:9px;color:#e8e8e8">?</div>
<div class="t" style="left:57px;top:503px;font-size:9px;color:#e8e8e8">?</div>
<svg style="left:54px;top:466px;" width="12" height="10" viewBox="0 0 12 10"><path d="M2 4 Q2 1 6 1 L8 1 M6 0 L8 1 L6 3 M10 6 L10 9 M9 7 L10 9 L11 7" stroke="#777" stroke-width="1.2" fill="none"/></svg>
<div class="a" style="left:10px;top:507px;width:8px;height:8px;background:#fff;border:1px solid #111"></div>
<div class="a" style="left:14px;top:511px;width:8px;height:8px;background:#111;border:1px solid #fff"></div>
<div class="a" style="left:9px;top:526px;width:62px;height:18px;background:#4f4f4f;"></div>
<div class="a" style="left:13px;top:528px;width:14px;height:14px;background:#1a3ad8;border:1px solid #111"></div>
<div class="a" style="left:16px;top:531px;width:8px;height:8px;background:#555;"></div>
<div class="a" style="left:30px;top:526px;width:20px;height:18px;background:#3a3a3a;"></div>
<div class="a" style="left:33px;top:528px;width:14px;height:14px;border:1px solid #111;background:radial-gradient(#2af 0%,#06f 70%,#0048d0 100%)"></div>
<svg style="left:53px;top:528px;" width="14" height="14" viewBox="0 0 14 14"><rect x="0.5" y="0.5" width="13" height="13" fill="#fff" stroke="#111"/><path d="M1 13 L13 1" stroke="#e01010" stroke-width="2.4"/></svg>
<div class="a" style="left:9px;top:550px;width:62px;height:19px;background:#4f4f4f;"></div>
<div class="a" style="left:11px;top:550px;width:20px;height:19px;background:#383838;"></div>
<svg style="left:13px;top:552px;" width="16" height="15" viewBox="0 0 16 15"><circle cx="6" cy="6" r="5" fill="#535353" stroke="#d4d4d4" stroke-width="1.3"/><rect x="7" y="7" width="7" height="7" fill="#d4d4d4"/></svg>
<svg style="left:33px;top:552px;" width="16" height="15" viewBox="0 0 16 15"><circle cx="6" cy="6" r="5" fill="#d4d4d4"/><rect x="7" y="7" width="7" height="7" fill="#d4d4d4"/><circle cx="6" cy="6" r="5" fill="none" stroke="#535353" stroke-width="0.8"/></svg>
<svg style="left:52px;top:552px;" width="16" height="15" viewBox="0 0 16 15"><circle cx="7" cy="7" r="5" fill="none" stroke="#6a6a6a" stroke-width="2"/></svg>
<svg style="left:28px;top:576px;" width="24" height="18" viewBox="0 0 24 18"><rect x="1.5" y="6.5" width="13" height="10" fill="#6a6a6a" stroke="#d4d4d4" stroke-width="1.2"/><rect x="8.5" y="1.5" width="14" height="10" fill="#6a6a6a" stroke="#d4d4d4" stroke-width="1.2"/><rect x="8.5" y="1.5" width="14" height="2.5" fill="#d4d4d4"/><rect x="1.5" y="6.5" width="13" height="2.5" fill="#d4d4d4"/></svg>
<svg style="left:1485px;top:71px;" width="9" height="8" viewBox="0 0 9 8"><path d="M4 1.2 L1.5 4 L4 6.8 M8 1.2 L5.5 4 L8 6.8" stroke="#e8e8e8" stroke-width="1.6" fill="none"/></svg>
<svg style="left:1732px;top:71px;" width="9" height="8" viewBox="0 0 9 8"><path d="M1 1.2 L3.5 4 L1 6.8 M5 1.2 L7.5 4 L5 6.8" stroke="#e8e8e8" stroke-width="1.6" fill="none"/></svg>
<div class="a" style="left:1461px;top:80px;width:38px;height:68px;background:#535353;border-bottom:2px solid #454545"></div>
<svg style="left:1471px;top:84px;" width="18" height="4" viewBox="0 0 18 4"><rect x="0" y="0" width="1" height="4" fill="#3c3c3c"/><rect x="2" y="0" width="1" height="4" fill="#3c3c3c"/><rect x="4" y="0" width="1" height="4" fill="#3c3c3c"/><rect x="6" y="0" width="1" height="4" fill="#3c3c3c"/><rect x="8" y="0" width="1" height="4" fill="#3c3c3c"/><rect x="10" y="0" width="1" height="4" fill="#3c3c3c"/><rect x="12" y="0" width="1" height="4" fill="#3c3c3c"/><rect x="14" y="0" width="1" height="4" fill="#3c3c3c"/><rect x="16" y="0" width="1" height="4" fill="#3c3c3c"/></svg>
<div class="a" style="left:1461px;top:150px;width:38px;height:68px;background:#535353;border-bottom:2px solid #454545"></div>
<svg style="left:1471px;top:154px;" width="18" height="4" viewBox="0 0 18 4"><rect x="0" y="0" width="1" height="4" fill="#3c3c3c"/><rect x="2" y="0" width="1" height="4" fill="#3c3c3c"/><rect x="4" y="0" width="1" height="4" fill="#3c3c3c"/><rect x="6" y="0" width="1" height="4" fill="#3c3c3c"/><rect x="8" y="0" width="1" height="4" fill="#3c3c3c"/><rect x="10" y="0" width="1" height="4" fill="#3c3c3c"/><rect x="12" y="0" width="1" height="4" fill="#3c3c3c"/><rect x="14" y="0" width="1" height="4" fill="#3c3c3c"/><rect x="16" y="0" width="1" height="4" fill="#3c3c3c"/></svg>
<div class="a" style="left:1461px;top:219px;width:38px;height:68px;background:#535353;border-bottom:2px solid #454545"></div>
<svg style="left:1471px;top:223px;" width="18" height="4" viewBox="0 0 18 4"><rect x="0" y="0" width="1" height="4" fill="#3c3c3c"/><rect x="2" y="0" width="1" height="4" fill="#3c3c3c"/><rect x="4" y="0" width="1" height="4" fill="#3c3c3c"/><rect x="6" y="0" width="1" height="4" fill="#3c3c3c"/><rect x="8" y="0" width="1" height="4" fill="#3c3c3c"/><rect x="10" y="0" width="1" height="4" fill="#3c3c3c"/><rect x="12" y="0" width="1" height="4" fill="#3c3c3c"/><rect x="14" y="0" width="1" height="4" fill="#3c3c3c"/><rect x="16" y="0" width="1" height="4" fill="#3c3c3c"/></svg>
<div class="a" style="left:1461px;top:288px;width:38px;height:68px;background:#535353;border-bottom:2px solid #454545"></div>
<svg style="left:1471px;top:292px;" width="18" height="4" viewBox="0 0 18 4"><rect x="0" y="0" width="1" height="4" fill="#3c3c3c"/><rect x="2" y="0" width="1" height="4" fill="#3c3c3c"/><rect x="4" y="0" width="1" height="4" fill="#3c3c3c"/><rect x="6" y="0" width="1" height="4" fill="#3c3c3c"/><rect x="8" y="0" width="1" height="4" fill="#3c3c3c"/><rect x="10" y="0" width="1" height="4" fill="#3c3c3c"/><rect x="12" y="0" width="1" height="4" fill="#3c3c3c"/><rect x="14" y="0" width="1" height="4" fill="#3c3c3c"/><rect x="16" y="0" width="1" height="4" fill="#3c3c3c"/></svg>
<div class="a" style="left:1461px;top:357px;width:38px;height:40px;background:#535353;border-bottom:2px solid #454545"></div>
<svg style="left:1471px;top:361px;" width="18" height="4" viewBox="0 0 18 4"><rect x="0" y="0" width="1" height="4" fill="#3c3c3c"/><rect x="2" y="0" width="1" height="4" fill="#3c3c3c"/><rect x="4" y="0" width="1" height="4" fill="#3c3c3c"/><rect x="6" y="0" width="1" height="4" fill="#3c3c3c"/><rect x="8" y="0" width="1" height="4" fill="#3c3c3c"/><rect x="10" y="0" width="1" height="4" fill="#3c3c3c"/><rect x="12" y="0" width="1" height="4" fill="#3c3c3c"/><rect x="14" y="0" width="1" height="4" fill="#3c3c3c"/><rect x="16" y="0" width="1" height="4" fill="#3c3c3c"/></svg>
<div class="a" style="left:1461px;top:398px;width:38px;height:40px;background:#535353;border-bottom:2px solid #454545"></div>
<svg style="left:1471px;top:402px;" width="18" height="4" viewBox="0 0 18 4"><rect x="0" y="0" width="1" height="4" fill="#3c3c3c"/><rect x="2" y="0" width="1" height="4" fill="#3c3c3c"/><rect x="4" y="0" width="1" height="4" fill="#3c3c3c"/><rect x="6" y="0" width="1" height="4" fill="#3c3c3c"/><rect x="8" y="0" width="1" height="4" fill="#3c3c3c"/><rect x="10" y="0" width="1" height="4" fill="#3c3c3c"/><rect x="12" y="0" width="1" height="4" fill="#3c3c3c"/><rect x="14" y="0" width="1" height="4" fill="#3c3c3c"/><rect x="16" y="0" width="1" height="4" fill="#3c3c3c"/></svg>
<div class="a" style="left:1461px;top:437px;width:38px;height:518px;background:#535353;"></div>
<svg style="left:1471px;top:95px;" width="18" height="18" viewBox="0 0 18 18"><circle cx="9" cy="9" r="6.5" fill="#d4d4d4"/><circle cx="9" cy="9" r="8" fill="none" stroke="#d4d4d4" stroke-width="1.3" stroke-dasharray="2 1.4"/></svg>
<svg style="left:1472px;top:123px;" width="17" height="17" viewBox="0 0 17 17"><defs><linearGradient id="qg" x1="0" y1="0" x2="1" y2="1"><stop offset="0" stop-color="#f0f0f0"/><stop offset="1" stop-color="#777"/></linearGradient></defs><path d="M1 1 A15 15 0 0 1 16 16 H1Z" fill="url(#qg)" stroke="#ddd" stroke-width="1"/></svg>
<div class="a" style="left:1466px;top:162px;width:27px;height:22px;background:#383838;"></div>
<svg style="left:1469px;top:163px;" width="20" height="20" viewBox="0 0 20 20"><rect x="2" y="1" width="1.5" height="18" fill="#d4d4d4"/><rect x="5" y="4" width="7" height="5" fill="#d4d4d4"/><rect x="5" y="11" width="12" height="5" fill="#d4d4d4"/></svg>
<svg style="left:1471px;top:193px;" width="18" height="18" viewBox="0 0 18 18"><rect x="1" y="1" width="9" height="9" fill="#d4d4d4"/><rect x="7" y="7" width="9" height="9" fill="#d4d4d4" stroke="#535353" stroke-width="1"/><rect x="7" y="7" width="3" height="3" fill="#535353"/></svg>
<svg style="left:1471px;top:232px;" width="18" height="19" viewBox="0 0 18 19"><rect x="4" y="10" width="10" height="8" fill="#d4d4d4"/><path d="M6 10 L4 2 M9 10 L9 1 M12 10 L15 3" stroke="#d4d4d4" stroke-width="2.2"/><circle cx="5" cy="5" r="2" fill="#d4d4d4"/><circle cx="14" cy="5" r="2" fill="#d4d4d4"/></svg>
<svg style="left:1471px;top:261px;" width="18" height="18" viewBox="0 0 18 18"><circle cx="9" cy="5" r="4" fill="#d4d4d4"/><circle cx="4.5" cy="10" r="4" fill="#d4d4d4"/><circle cx="13.5" cy="10" r="4" fill="#d4d4d4"/><path d="M9 9 L6 17 H12Z" fill="#d4d4d4"/></svg>
<svg style="left:1470px;top:300px;" width="20" height="20" viewBox="0 0 20 20"><rect x="1" y="9" width="6" height="6" fill="none" stroke="#d4d4d4" stroke-width="1.2"/><rect x="4" y="12" width="6" height="6" fill="#d4d4d4"/><path d="M9 11 L13.5 1 L18 11 M11 7 H16" stroke="#d4d4d4" stroke-width="1.7" fill="none"/></svg>
<svg style="left:1470px;top:328px;" width="20" height="20" viewBox="0 0 20 20"><rect x="1" y="9" width="6" height="6" fill="none" stroke="#d4d4d4" stroke-width="1.2"/><rect x="4" y="12" width="6" height="6" fill="#d4d4d4"/><path d="M13 2 H18 M15 2 V14 M17 2 V14" stroke="#d4d4d4" stroke-width="1.4"/><circle cx="13" cy="6" r="3.5" fill="#d4d4d4"/></svg>
<svg style="left:1470px;top:369px;" width="20" height="20" viewBox="0 0 20 20"><text x="2" y="17" font-family="Liberation Serif" font-style="italic" font-size="19" fill="#d4d4d4">A</text></svg>
<svg style="left:1471px;top:411px;" width="18" height="18" viewBox="0 0 18 18"><path d="M8 2 H2 V16 H16 V10" stroke="#d4d4d4" stroke-width="2" fill="none"/><path d="M8 10 L16 2 M11 2 H16 V7" stroke="#d4d4d4" stroke-width="2" fill="none"/></svg>
<div class="a" style="left:1500px;top:80px;width:245px;height:28px;background:#474747;"></div>
<div class="a" style="left:1500px;top:80px;width:42px;height:28px;background:#4c4c4c;border-right:1px solid #434343"></div>
<div class="a" style="left:1542px;top:80px;width:43px;height:28px;background:#4c4c4c;border-right:1px solid #434343"></div>
<div class="a" style="left:1585px;top:80px;width:43px;height:29px;background:#535353;"></div>
<div class="t" style="left:1511px;top:88px;font-size:12px;color:#bdbdbd;">画板</div>
<div class="t" style="left:1553px;top:88px;font-size:12px;color:#bdbdbd;">链接</div>
<div class="t" style="left:1596px;top:88px;font-size:12px;color:#f2f2f2;">图层</div>
<svg style="left:1729px;top:89px;" width="13" height="10" viewBox="0 0 13 10"><rect x="0" y="1" width="13" height="1.6" fill="#d0d0d0"/><rect x="0" y="4.3" width="13" height="1.6" fill="#d0d0d0"/><rect x="0" y="7.6" width="13" height="1.6" fill="#d0d0d0"/></svg>
<div class="a" style="left:1506px;top:113px;width:235px;height:218px;background:#535353;border:1px solid #5e5e5e"></div>
<div class="a" style="left:1507px;top:114px;width:233px;height:22px;background:#506383;"></div>
<div class="a" style="left:1507px;top:135px;width:233px;height:22px;background:#535353;border-top:1px solid #4a4a4a"></div>
<div class="a" style="left:1507px;top:157px;width:233px;height:22px;background:#535353;border-top:1px solid #4a4a4a"></div>
<div class="a" style="left:1507px;top:178px;width:233px;height:1px;background:#4a4a4a;"></div>
<div class="a" style="left:1528px;top:135px;width:1px;height:43px;background:#4a4a4a;"></div>
<div class="a" style="left:1705px;top:135px;width:1px;height:43px;background:#4a4a4a;"></div>
<svg style="left:1509px;top:119px;" width="16" height="10" viewBox="0 0 16 10"><path d="M1 5 Q8 -2 15 5 Q8 12 1 5Z" fill="#d8d8d8"/><circle cx="8" cy="5" r="2.4" fill="#535353"/><circle cx="8" cy="5" r="1.2" fill="#d8d8d8"/></svg>
<div class="a" style="left:1550px;top:114px;width:3px;height:21px;background:#5a80f0;"></div>
<svg style="left:1509px;top:141px;" width="16" height="10" viewBox="0 0 16 10"><path d="M1 5 Q8 -2 15 5 Q8 12 1 5Z" fill="#d8d8d8"/><circle cx="8" cy="5" r="2.4" fill="#535353"/><circle cx="8" cy="5" r="1.2" fill="#d8d8d8"/></svg>
<div class="a" style="left:1550px;top:136px;width:3px;height:21px;background:#5a80f0;"></div>
<svg style="left:1509px;top:163px;" width="16" height="10" viewBox="0 0 16 10"><path d="M1 5 Q8 -2 15 5 Q8 12 1 5Z" fill="#d8d8d8"/><circle cx="8" cy="5" r="2.4" fill="#535353"/><circle cx="8" cy="5" r="1.2" fill="#d8d8d8"/></svg>
<div class="a" style="left:1550px;top:158px;width:3px;height:21px;background:#5a80f0;"></div>
<svg style="left:1561px;top:120px;" width="10" height="7" viewBox="0 0 10 7"><path d="M1 1.5 L5 5.5 L9 1.5" stroke="#e0e0e0" stroke-width="1.8" fill="none"/></svg>
<div class="a" style="left:1579px;top:116px;width:19px;height:19px;background:#fff;border:1px solid #111"></div>
<div class="a" style="left:1582px;top:124px;width:2px;height:2px;background:#30c0c0;"></div>
<div class="a" style="left:1592px;top:124px;width:2px;height:2px;background:#c05030;"></div>
<div class="t" style="left:1603px;top:118px;font-size:12px;color:#e4e4e4;">图层 <span style="font-size:12px">1</span></div>
<svg style="left:1710px;top:119px;" width="12" height="12" viewBox="0 0 12 12"><circle cx="6" cy="6" r="4.5" fill="none" stroke="#e0e0e0" stroke-width="1.3"/></svg>
<div class="a" style="left:1724px;top:119px;width:9px;height:9px;background:#4b80ff;border:1px solid #111"></div>
<svg style="left:1734px;top:113px;" width="7" height="7" viewBox="0 0 7 7"><path d="M0 0 H7 V7Z" fill="#ddd"/></svg>
<div class="a" style="left:1602px;top:137px;width:19px;height:19px;background:#fff;border:1px solid #111"></div>
<svg style="left:1603px;top:138px;" width="17" height="17" viewBox="0 0 17 17"><polygon points="1,8.5 4.5,2 12.5,2 16,8.5 12.5,15 4.5,15" fill="#e8551a"/></svg>
<div class="t" style="left:1625px;top:140px;font-size:12px;color:#e4e4e4;">&lt; 多 . . .</div>
<div class="a" style="left:1602px;top:159px;width:19px;height:19px;background:#fff;border:1px solid #111"></div>
<svg style="left:1603px;top:160px;" width="17" height="17" viewBox="0 0 17 17"><circle cx="8.5" cy="8.5" r="7.8" fill="#1ee6e4"/><circle cx="8.5" cy="8.5" r="7.8" fill="none" stroke="#6aa040" stroke-width="0.8"/></svg>
<div class="t" style="left:1625px;top:162px;font-size:12px;color:#e4e4e4;">&lt; 椭圆 &gt;</div>
<svg style="left:1708px;top:139px;" width="14" height="14" viewBox="0 0 14 14"><circle cx="7" cy="7" r="5.8" fill="none" stroke="#e0e0e0" stroke-width="1.2"/><circle cx="7" cy="7" r="3.3" fill="none" stroke="#e0e0e0" stroke-width="1.2"/></svg>
<div class="a" style="left:1724px;top:141px;width:9px;height:9px;background:#4b80ff;border:1px solid #111"></div>
<svg style="left:1708px;top:161px;" width="14" height="14" viewBox="0 0 14 14"><circle cx="7" cy="7" r="5.8" fill="none" stroke="#e0e0e0" stroke-width="1.2"/><circle cx="7" cy="7" r="3.3" fill="none" stroke="#e0e0e0" stroke-width="1.2"/></svg>
<div class="a" style="left:1724px;top:163px;width:9px;height:9px;background:#4b80ff;border:1px solid #111"></div>
<div class="t" style="left:1506px;top:334px;font-size:12px;color:#dcdcdc;">1 个图层</div>
<svg style="left:1601px;top:333px;" width="16" height="16" viewBox="0 0 16 16"><circle cx="9.5" cy="6" r="4.5" fill="none" stroke="#e0e0e0" stroke-width="1.6"/><path d="M6.5 9.5 L2 14.5" stroke="#e0e0e0" stroke-width="2"/></svg>
<svg style="left:1628px;top:334px;" width="14" height="14" viewBox="0 0 14 14"><rect x="1" y="1" width="8" height="8" fill="none" stroke="#d8d8d8" stroke-width="1.3"/><rect x="4" y="4" width="8" height="8" fill="#d8d8d8"/><rect x="5" y="5" width="9" height="9" fill="none" stroke="#d8d8d8" stroke-width="1"/></svg>
<svg style="left:1652px;top:333px;" width="16" height="15" viewBox="0 0 16 15"><path d="M2 1 V5 H6 M4 3 L6 5 L4 7" stroke="#d8d8d8" stroke-width="1.2" fill="none"/><path d="M7 3 H14 V14 H9 L7 12Z" fill="#d8d8d8"/></svg>
<svg style="left:1680px;top:333px;" width="14" height="15" viewBox="0 0 14 15"><path d="M3 2 H13 V13 H6 L3 10Z" fill="#d8d8d8"/><path d="M3 10 H6 V13" fill="#535353"/></svg>
<svg style="left:1705px;top:333px;" width="14" height="15" viewBox="0 0 14 15"><path d="M2 3 H12 M5 3 V1.5 H9 V3 M3 4 V13.5 H11 V4 M5.5 5.5 V12 M8.5 5.5 V12" stroke="#6e6e6e" stroke-width="1.2" fill="none"/></svg>
<div class="a" style="left:1500px;top:350px;width:245px;height:3px;background:#424242;"></div>
<div class="a" style="left:1500px;top:353px;width:245px;height:26px;background:#474747;"></div>
<div class="a" style="left:1500px;top:353px;width:43px;height:26px;background:#4c4c4c;border-right:1px solid #434343"></div>
<div class="a" style="left:1543px;top:353px;width:41px;height:27px;background:#535353;"></div>
<div class="a" style="left:1584px;top:353px;width:65px;height:26px;background:#4c4c4c;border-right:1px solid #434343"></div>
<div class="t" style="left:1511px;top:360px;font-size:12px;color:#bdbdbd;">描边</div>
<div class="t" style="left:1554px;top:360px;font-size:12px;color:#f2f2f2;">色板</div>
<div class="t" style="left:1595px;top:360px;font-size:12px;color:#bdbdbd;">图形样式</div>
<svg style="left:1729px;top:361px;" width="13" height="10" viewBox="0 0 13 10"><rect x="0" y="1" width="13" height="1.6" fill="#d0d0d0"/><rect x="0" y="4.3" width="13" height="1.6" fill="#d0d0d0"/><rect x="0" y="7.6" width="13" height="1.6" fill="#d0d0d0"/></svg>
<div class="a" style="left:1507px;top:386px;width:20px;height:20px;background:#535353;border:1px solid #222"></div>
<div class="a" style="left:1516px;top:396px;width:20px;height:20px;background:#535353;border:1px solid #222"></div>
<div class="a" style="left:1521px;top:401px;width:10px;height:10px;background:#535353;border:1px solid #222"></div>
<div class="t" style="left:1517px;top:393px;font-size:8px;color:#e8e8e8">?</div>
<div class="t" style="left:1532px;top:393px;font-size:8px;color:#e8e8e8">?</div>
<div class="t" style="left:1517px;top:407px;font-size:8px;color:#e8e8e8">?</div>
<div class="t" style="left:1532px;top:407px;font-size:8px;color:#e8e8e8">?</div>
<div class="t" style="left:1514px;top:388px;font-size:10px;color:#e8e8e8">?</div>
<div class="a" style="left:1693px;top:386px;width:48px;height:24px;background:#4f4f4f;border-radius:3px"></div>
<div class="a" style="left:1717px;top:387px;width:23px;height:22px;background:#383838;border-radius:2px"></div>
<svg style="left:1697px;top:390px;" width="14" height="15" viewBox="0 0 14 15"><rect x="0" y="1" width="13" height="2" fill="#d8d8d8"/><rect x="0" y="5" width="13" height="2" fill="#d8d8d8"/><rect x="0" y="9" width="13" height="2" fill="#d8d8d8"/><rect x="0" y="13" width="13" height="2" fill="#d8d8d8"/></svg>
<svg style="left:1721px;top:390px;" width="15" height="15" viewBox="0 0 15 15"><rect x="0" y="0" width="4" height="4" fill="#d8d8d8"/><rect x="0" y="5" width="4" height="4" fill="#d8d8d8"/><rect x="0" y="10" width="4" height="4" fill="#d8d8d8"/><rect x="5" y="0" width="4" height="4" fill="#d8d8d8"/><rect x="5" y="5" width="4" height="4" fill="#d8d8d8"/><rect x="5" y="10" width="4" height="4" fill="#d8d8d8"/><rect x="10" y="0" width="4" height="4" fill="#d8d8d8"/><rect x="10" y="5" width="4" height="4" fill="#d8d8d8"/><rect x="10" y="10" width="4" height="4" fill="#d8d8d8"/></svg>
<div class="a" style="left:1506px;top:420px;width:235px;height:182px;background:#535353;border:1px solid #5c5c5c"></div>
<svg style="left:1507px;top:422px;" width="210" height="90" viewBox="0 0 210 90"><defs><linearGradient id="gg1" x1="0" x2="1"><stop offset="0" stop-color="#fff"/><stop offset="1" stop-color="#111"/></linearGradient><linearGradient id="gg2" x1="0" y1="0" x2="1" y2="1"><stop offset="0" stop-color="#ffe000"/><stop offset="1" stop-color="#f05a20"/></linearGradient></defs><rect x="0" y="0" width="13" height="13" fill="#fff"/><path d="M1 12 L12 1" stroke="#d01010" stroke-width="2"/><rect x="14" y="0" width="13" height="13" fill="#f4f4f4"/><circle cx="20.5" cy="6.5" r="4.5" fill="none" stroke="#333" stroke-width="0.9"/><circle cx="20.5" cy="6.5" r="1.3" fill="none" stroke="#333" stroke-width="0.9"/><path d="M20.5 0 V13 M14 6.5 H27" stroke="#333" stroke-width="0.8"/><rect x="28" y="0" width="13" height="13" fill="#ffffff"/><rect x="42" y="0" width="13" height="13" fill="#231815"/><rect x="56" y="0" width="13" height="13" fill="#e60012"/><rect x="70" y="0" width="13" height="13" fill="#fff100"/><rect x="84" y="0" width="13" height="13" fill="#009944"/><rect x="98" y="0" width="13" height="13" fill="#00a0e9"/><rect x="112" y="0" width="13" height="13" fill="#1d2088"/><rect x="126" y="0" width="13" height="13" fill="#e4007f"/><rect x="140" y="0" width="13" height="13" fill="#d7001a"/><rect x="154" y="0" width="13" height="13" fill="#e83828"/><rect x="168" y="0" width="13" height="13" fill="#ea5514"/><rect x="182" y="0" width="13" height="13" fill="#f39800"/><rect x="196" y="0" width="13" height="13" fill="#f8b62d"/><rect x="0" y="14" width="13" height="13" fill="#fff100"/><rect x="14" y="14" width="13" height="13" fill="#d9df1b"/><rect x="28" y="14" width="13" height="13" fill="#8fc31f"/><rect x="42" y="14" width="13" height="13" fill="#22ac38"/><rect x="56" y="14" width="13" height="13" fill="#009b45"/><rect x="70" y="14" width="13" height="13" fill="#00773b"/><rect x="84" y="14" width="13" height="13" fill="#13ae67"/><rect x="98" y="14" width="13" height="13" fill="#0ba49f"/><rect x="112" y="14" width="13" height="13" fill="#2ea7e0"/><rect x="126" y="14" width="13" height="13" fill="#0b78cd"/><rect x="140" y="14" width="13" height="13" fill="#1a2d8e"/><rect x="154" y="14" width="13" height="13" fill="#171c61"/><rect x="168" y="14" width="13" height="13" fill="#6b1d8d"/><rect x="182" y="14" width="13" height="13" fill="#9c0b8c"/><rect x="196" y="14" width="13" height="13" fill="#b0085a"/><rect x="0" y="28" width="13" height="13" fill="#d70f5f"/><rect x="14" y="28" width="13" height="13" fill="#e5127f"/><rect x="28" y="28" width="13" height="13" fill="#d6c3a3"/><rect x="42" y="28" width="13" height="13" fill="#a89078"/><rect x="56" y="28" width="13" height="13" fill="#8c7461"/><rect x="70" y="28" width="13" height="13" fill="#6e5444"/><rect x="84" y="28" width="13" height="13" fill="#c9a06c"/><rect x="98" y="28" width="13" height="13" fill="#b8844a"/><rect x="112" y="28" width="13" height="13" fill="#a0632f"/><rect x="126" y="28" width="13" height="13" fill="#8d5226"/><rect x="140" y="28" width="13" height="13" fill="#72390c"/><rect x="154" y="28" width="13" height="13" fill="#4d2a0e"/><rect x="168" y="28" width="13" height="13" fill="url(#gg1)"/><rect x="182" y="28" width="13" height="13" fill="url(#gg2)"/><rect x="196" y="28" width="13" height="13" fill="#4aa0e0"/><rect x="196" y="28" width="1.5" height="1.5" fill="#cde"/><rect x="196" y="34" width="1.5" height="1.5" fill="#cde"/><rect x="196" y="40" width="1.5" height="1.5" fill="#cde"/><rect x="199" y="31" width="1.5" height="1.5" fill="#cde"/><rect x="199" y="37" width="1.5" height="1.5" fill="#cde"/><rect x="202" y="28" width="1.5" height="1.5" fill="#cde"/><rect x="202" y="34" width="1.5" height="1.5" fill="#cde"/><rect x="202" y="40" width="1.5" height="1.5" fill="#cde"/><rect x="205" y="31" width="1.5" height="1.5" fill="#cde"/><rect x="205" y="37" width="1.5" height="1.5" fill="#cde"/><rect x="208" y="28" width="1.5" height="1.5" fill="#cde"/><rect x="208" y="34" width="1.5" height="1.5" fill="#cde"/><rect x="208" y="40" width="1.5" height="1.5" fill="#cde"/><rect x="0" y="42" width="13" height="13" fill="#111"/><circle cx="6.5" cy="48.5" r="5" fill="#eee"/><path d="M6.5 45 L10 48.5 L6.5 52 L3 48.5Z" fill="#bbb"/><rect x="14" y="42" width="13" height="13" fill="#7cc43a"/><rect x="17" y="45" width="7" height="7" fill="#3a9a20"/><rect x="14" y="42" width="13" height="2" fill="#e8f0d0"/><rect x="14" y="53" width="13" height="2" fill="#e8f0d0"/><rect x="28" y="42" width="13" height="13" fill="#b09070"/><circle cx="32" cy="46" r="2.5" fill="#e0c8a8"/><circle cx="37" cy="51" r="2.5" fill="#e0c8a8"/><circle cx="38" cy="45" r="1.5" fill="#e0c8a8"/><rect x="1" y="60" width="11" height="8" fill="#d4d4d4"/><rect x="1" y="58" width="4" height="1.5" fill="#d4d4d4"/><rect x="14" y="58" width="13" height="13" fill="#231815"/><rect x="28" y="58" width="13" height="13" fill="#3e3a39"/><rect x="42" y="58" width="13" height="13" fill="#595757"/><rect x="56" y="58" width="13" height="13" fill="#727171"/><rect x="70" y="58" width="13" height="13" fill="#898989"/><rect x="84" y="58" width="13" height="13" fill="#9fa0a0"/><rect x="98" y="58" width="13" height="13" fill="#b5b5b6"/><rect x="112" y="58" width="13" height="13" fill="#c9caca"/><rect x="126" y="58" width="13" height="13" fill="#dcdddd"/><rect x="140" y="58" width="13" height="13" fill="#efefef"/><rect x="154" y="58" width="13" height="13" fill="#ffffff"/><rect x="1" y="76" width="11" height="8" fill="#d4d4d4"/><rect x="1" y="74" width="4" height="1.5" fill="#d4d4d4"/><rect x="14" y="74" width="13" height="13" fill="#e60012"/><rect x="28" y="74" width="13" height="13" fill="#ed6c00"/><rect x="42" y="74" width="13" height="13" fill="#ffe100"/><rect x="56" y="74" width="13" height="13" fill="#009944"/><rect x="70" y="74" width="13" height="13" fill="#0c3ea0"/><rect x="84" y="74" width="13" height="13" fill="#8e2c95"/></svg>
<svg style="left:1511px;top:605px;" width="18" height="14" viewBox="0 0 18 14"><rect x="1" y="1" width="2" height="12" fill="#d8d8d8"/><rect x="5" y="1" width="2" height="12" fill="#d8d8d8"/><path d="M9 2 L13 12" stroke="#d8d8d8" stroke-width="2"/><rect x="15" y="11" width="2" height="2" fill="#d8d8d8"/></svg>
<svg style="left:1538px;top:605px;" width="14" height="15" viewBox="0 0 14 15"><circle cx="6" cy="7" r="4.5" fill="none" stroke="#d8d8d8" stroke-width="1.5"/><circle cx="6" cy="7" r="1.8" fill="#d8d8d8"/><circle cx="11" cy="2.5" r="1.8" fill="#d8d8d8"/><circle cx="11" cy="12.5" r="1.8" fill="#d8d8d8"/></svg>
<svg style="left:1560px;top:604px;" width="22" height="14" viewBox="0 0 22 14"><path d="M3 13 Q0 13 1 9 Q2 6 6 7 Q8 1 14 3 Q18 4 18 8 Q22 9 20 13Z" fill="#6a6a6a"/></svg>
<svg style="left:1600px;top:604px;" width="18" height="15" viewBox="0 0 18 15"><rect x="1" y="1" width="3" height="3" fill="#d8d8d8"/><rect x="1" y="5" width="3" height="3" fill="#d8d8d8"/><rect x="1" y="9" width="3" height="3" fill="#d8d8d8"/><rect x="5" y="1" width="3" height="3" fill="#d8d8d8"/><rect x="5" y="5" width="3" height="3" fill="#d8d8d8"/><rect x="5" y="9" width="3" height="3" fill="#d8d8d8"/><rect x="9" y="1" width="3" height="3" fill="#d8d8d8"/><rect x="9" y="5" width="3" height="3" fill="#d8d8d8"/><rect x="9" y="9" width="3" height="3" fill="#d8d8d8"/><path d="M14 12 h3 l-1.5 2z" fill="#d8d8d8"/></svg>
<svg style="left:1628px;top:604px;" width="14" height="15" viewBox="0 0 14 15"><rect x="1" y="1" width="11" height="12" fill="none" stroke="#6e6e6e" stroke-width="1.2"/><path d="M4 5 h5 M4 8 h5" stroke="#6e6e6e"/></svg>
<svg style="left:1652px;top:604px;" width="16" height="14" viewBox="0 0 16 14"><path d="M1 3 H6 L7 4.5 H15 V13 H1Z" fill="#d8d8d8"/></svg>
<svg style="left:1680px;top:604px;" width="14" height="15" viewBox="0 0 14 15"><path d="M3 2 H13 V13 H6 L3 10Z" fill="#6e6e6e"/></svg>
<svg style="left:1705px;top:604px;" width="14" height="15" viewBox="0 0 14 15"><path d="M2 3 H12 M5 3 V1.5 H9 V3 M3 4 V13.5 H11 V4 M5.5 5.5 V12 M8.5 5.5 V12" stroke="#6e6e6e" stroke-width="1.2" fill="none"/></svg>
<div class="a" style="left:1500px;top:621px;width:245px;height:3px;background:#424242;"></div>
<div class="a" style="left:1500px;top:624px;width:245px;height:27px;background:#474747;"></div>
<div class="a" style="left:1500px;top:624px;width:42px;height:27px;background:#4c4c4c;border-right:1px solid #434343"></div>
<div class="a" style="left:1542px;top:624px;width:53px;height:27px;background:#4c4c4c;border-right:1px solid #434343"></div>
<div class="a" style="left:1595px;top:624px;width:50px;height:28px;background:#535353;"></div>
<div class="t" style="left:1511px;top:631px;font-size:12px;color:#bdbdbd;">颜色</div>
<div class="t" style="left:1553px;top:631px;font-size:12px;color:#bdbdbd;">透明度</div>
<div class="t" style="left:1601px;top:631px;font-size:12px;color:#f2f2f2;"><svg class=ud width=7 height=10 viewBox='0 0 7 10'><path d='M1 4 L3.5 1.2 L6 4 M1 6 L3.5 8.8 L6 6' stroke='#e0e0e0' stroke-width='1.2' fill='none'/></svg>渐变</div>
<svg style="left:1729px;top:633px;" width="13" height="10" viewBox="0 0 13 10"><rect x="0" y="1" width="13" height="1.6" fill="#d0d0d0"/><rect x="0" y="4.3" width="13" height="1.6" fill="#d0d0d0"/><rect x="0" y="7.6" width="13" height="1.6" fill="#d0d0d0"/></svg>
<div class="a" style="left:1506px;top:658px;width:32px;height:32px;background:#535353;border:1px solid #222"></div>
<svg style="left:1540px;top:671px;" width="8" height="5" viewBox="0 0 8 5"><path d="M0 0 H7 L3.5 4Z" fill="#d0d0d0"/></svg>
<div class="t" style="left:1556px;top:662px;font-size:12px;color:#d8d8d8;">类型 :</div>
<div class="a" style="left:1593px;top:659px;width:148px;height:19px;background:#474747;border:1px solid #4f4f4f"></div>
<svg style="left:1726px;top:665px;" width="10" height="7" viewBox="0 0 10 7"><path d="M1 1 L5 5 L9 1" stroke="#e8e8e8" stroke-width="1.8" fill="none"/></svg>
<div class="t" style="left:1556px;top:688px;font-size:12px;color:#d8d8d8;">描边 :</div>
<div class="a" style="left:1593px;top:686px;width:67px;height:19px;background:#4a4a4a;"></div>
<svg style="left:1596px;top:688px;" width="16" height="15" viewBox="0 0 16 15"><defs><linearGradient id="sg0" x1="0" x2="1"><stop offset="0" stop-color="#f0f0f0"/><stop offset="1" stop-color="#888"/></linearGradient></defs><path d="M1 1 H15 V6 H6 V14 H1Z" fill="url(#sg0)"/></svg>
<svg style="left:1618px;top:688px;" width="16" height="15" viewBox="0 0 16 15"><defs><linearGradient id="sg1" x1="0" x2="1"><stop offset="0" stop-color="#f0f0f0"/><stop offset="1" stop-color="#888"/></linearGradient></defs><path d="M1 1 H15 V6 H6 V14 H1Z" fill="url(#sg1)"/></svg>
<svg style="left:1640px;top:688px;" width="16" height="15" viewBox="0 0 16 15"><defs><linearGradient id="sg2" x1="0" x2="1"><stop offset="0" stop-color="#f0f0f0"/><stop offset="1" stop-color="#888"/></linearGradient></defs><path d="M1 1 H15 V6 H6 V14 H1Z" fill="url(#sg2)"/></svg>
<div class="a" style="left:1507px;top:696px;width:20px;height:20px;background:#535353;border:1px solid #222"></div>
<div class="a" style="left:1516px;top:706px;width:20px;height:20px;background:#535353;border:1px solid #222"></div>
<div class="a" style="left:1521px;top:711px;width:10px;height:10px;background:#535353;border:1px solid #222"></div>
<div class="t" style="left:1517px;top:703px;font-size:8px;color:#e8e8e8">?</div>
<div class="t" style="left:1532px;top:703px;font-size:8px;color:#e8e8e8">?</div>
<div class="t" style="left:1517px;top:717px;font-size:8px;color:#e8e8e8">?</div>
<div class="t" style="left:1532px;top:717px;font-size:8px;color:#e8e8e8">?</div>
<div class="t" style="left:1514px;top:698px;font-size:10px;color:#e8e8e8">?</div>
<svg style="left:1572px;top:714px;" width="18" height="14" viewBox="0 0 18 14"><path d="M1 13 H16 M1 13 L13 2 M9 13 A6 6 0 0 0 7 8" stroke="#8a8a8a" stroke-width="1.3" fill="none"/></svg>
<div class="a" style="left:1593px;top:711px;width:70px;height:20px;background:#565656;"></div>
<div class="t" style="left:1596px;top:713px;font-size:12px;color:#6e6e6e;">0°</div>
<svg style="left:1651px;top:718px;" width="9" height="6" viewBox="0 0 9 6"><path d="M1 1 L4.5 4.5 L8 1" stroke="#6e6e6e" stroke-width="1.4" fill="none"/></svg>
<svg style="left:1571px;top:737px;" width="19" height="17" viewBox="0 0 19 17"><path d="M1 1 V16 M0 1 H3 M0 16 H3" stroke="#8a8a8a" stroke-width="1.2"/><ellipse cx="11" cy="8" rx="6" ry="4.5" fill="none" stroke="#8a8a8a" stroke-width="1.3"/><path d="M5 15 H17" stroke="#8a8a8a"/></svg>
<div class="a" style="left:1593px;top:737px;width:70px;height:21px;background:#565656;"></div>
<svg style="left:1651px;top:744px;" width="9" height="6" viewBox="0 0 9 6"><path d="M1 1 L4.5 4.5 L8 1" stroke="#6e6e6e" stroke-width="1.4" fill="none"/></svg>
<svg style="left:1512px;top:735px;" width="20" height="16" viewBox="0 0 20 16"><rect x="1" y="1" width="9" height="6" fill="#6e6e6e"/><rect x="8" y="9" width="9" height="6" fill="#6e6e6e"/><path d="M12 3 h4 l-2 2z M1 11 h4" fill="#6e6e6e" stroke="#6e6e6e"/></svg>
<div class="a" style="left:1511px;top:771px;width:200px;height:42px;background:#535353;border:1px solid #333"></div>
<svg style="left:1721px;top:777px;" width="14" height="15" viewBox="0 0 14 15"><path d="M2 3 H12 M5 3 V1.5 H9 V3 M3 4 V13.5 H11 V4 M5.5 5.5 V12 M8.5 5.5 V12" stroke="#6e6e6e" stroke-width="1.2" fill="none"/></svg>
<div class="t" style="left:1533px;top:843px;font-size:12px;color:#6e6e6e;">不透明度 :</div>
<div class="a" style="left:1593px;top:840px;width:70px;height:20px;background:#565656;"></div>
<svg style="left:1651px;top:847px;" width="9" height="6" viewBox="0 0 9 6"><path d="M1 1 L4.5 4.5 L8 1" stroke="#6e6e6e" stroke-width="1.4" fill="none"/></svg>
<div class="t" style="left:1556px;top:869px;font-size:12px;color:#6e6e6e;">位置 :</div>
<div class="a" style="left:1593px;top:866px;width:70px;height:20px;background:#565656;"></div>
<div class="a" style="left:1500px;top:890px;width:245px;height:3px;background:#424242;"></div>
<div class="a" style="left:1500px;top:893px;width:245px;height:29px;background:#474747;"></div>
<div class="a" style="left:1500px;top:893px;width:49px;height:30px;background:#535353;"></div>
<div class="t" style="left:1504px;top:901px;font-size:12px;color:#f0f0f0;"><svg class=ud width=7 height=10 viewBox='0 0 7 10'><path d='M1 4 L3.5 1.2 L6 4 M1 6 L3.5 8.8 L6 6' stroke='#e0e0e0' stroke-width='1.2' fill='none'/></svg>变换</div>
<svg style="left:1729px;top:903px;" width="13" height="10" viewBox="0 0 13 10"><rect x="0" y="1" width="13" height="1.6" fill="#d0d0d0"/><rect x="0" y="4.3" width="13" height="1.6" fill="#d0d0d0"/><rect x="0" y="7.6" width="13" height="1.6" fill="#d0d0d0"/></svg>
<div class="a" style="left:1500px;top:922px;width:245px;height:4px;background:#424242;"></div>
<div class="a" style="left:1500px;top:926px;width:245px;height:29px;background:#474747;"></div>
<div class="a" style="left:1500px;top:926px;width:49px;height:29px;background:#535353;"></div>
<div class="a" style="left:1549px;top:926px;width:46px;height:29px;background:#4c4c4c;border-right:1px solid #434343"></div>
<div class="a" style="left:1595px;top:926px;width:76px;height:29px;background:#4c4c4c;border-right:1px solid #434343"></div>
<div class="t" style="left:1504px;top:933px;font-size:12px;color:#f0f0f0;"><svg class=ud width=7 height=10 viewBox='0 0 7 10'><path d='M1 4 L3.5 1.2 L6 4 M1 6 L3.5 8.8 L6 6' stroke='#e0e0e0' stroke-width='1.2' fill='none'/></svg>字符</div>
<div class="t" style="left:1558px;top:933px;font-size:12px;color:#bdbdbd;">段落</div>
<div class="t" style="left:1601px;top:933px;font-size:12px;color:#bdbdbd;">OpenType</div>
<svg style="left:1729px;top:935px;" width="13" height="10" viewBox="0 0 13 10"><rect x="0" y="1" width="13" height="1.6" fill="#d0d0d0"/><rect x="0" y="4.3" width="13" height="1.6" fill="#d0d0d0"/><rect x="0" y="7.6" width="13" height="1.6" fill="#d0d0d0"/></svg>
<div class="menu" style="left:155px;top:27px;width:271px;height:758px">
<div class="a" style="left:28px;top:0;width:1px;height:756px;background:#e4e4e4;border-right:1px solid #f9f9f9"></div>
<div class="a" style="left:2px;top:503px;width:263px;height:23px;background:linear-gradient(#f3f7fc,#e6eef8);border:1px solid #c5d6ea;border-radius:2px"></div>
<div class="mi" style="top:2px">变换(T)</div>
<div class="arr" style="left:253px;top:8px"></div>
<div class="mi" style="top:24px">排列(A)</div>
<div class="arr" style="left:253px;top:30px"></div>
<div class="sep" style="left:29px;top:50px;width:240px"></div>
<div class="mi" style="top:54px">编组(G)</div>
<div class="sc" style="right:21px;top:54px">Ctrl+G</div>
<div class="mi dis" style="top:76px">取消编组(U)</div>
<div class="sc dis" style="right:21px;top:76px">Shift+Ctrl+G</div>
<div class="mi" style="top:98px">锁定(L)</div>
<div class="arr" style="left:253px;top:104px"></div>
<div class="mi dis" style="top:120px">全部解锁(K)</div>
<div class="sc dis" style="right:21px;top:120px">Alt+Ctrl+2</div>
<div class="mi" style="top:142px">隐藏(H)</div>
<div class="arr" style="left:253px;top:148px"></div>
<div class="mi dis" style="top:164px">显示全部</div>
<div class="sc dis" style="right:21px;top:164px">Alt+Ctrl+3</div>
<div class="sep" style="left:29px;top:189px;width:240px"></div>
<div class="mi" style="top:194px">扩展(X)...</div>
<div class="mi dis" style="top:216px">扩展外观(E)</div>
<div class="mi dis" style="top:238px">裁剪图像(C)</div>
<div class="mi" style="top:260px">栅格化(Z)...</div>
<div class="mi" style="top:282px">创建渐变网格(D)...</div>
<div class="mi dis" style="top:304px">创建对象马赛克(J)...</div>
<div class="mi" style="top:326px">拼合透明度(F)...</div>
<div class="sep" style="left:29px;top:351px;width:240px"></div>
<div class="mi" style="top:356px">设为像素级优化(M)</div>
<div class="sep" style="left:29px;top:381px;width:240px"></div>
<div class="mi" style="top:386px">切片(S)</div>
<div class="arr" style="left:253px;top:392px"></div>
<div class="mi" style="top:408px">创建裁切标记(C)</div>
<div class="sep" style="left:29px;top:433px;width:240px"></div>
<div class="mi" style="top:438px">路径(P)</div>
<div class="arr" style="left:253px;top:444px"></div>
<div class="mi" style="top:460px">形状(P)</div>
<div class="arr" style="left:253px;top:466px"></div>
<div class="mi" style="top:482px">图案(E)</div>
<div class="arr" style="left:253px;top:488px"></div>
<div class="mi" style="top:504px">混合(B)</div>
<div class="arr" style="left:253px;top:510px"></div>
<div class="mi" style="top:526px">封套扭曲(V)</div>
<div class="arr" style="left:253px;top:532px"></div>
<div class="mi" style="top:548px">透视(P)</div>
<div class="arr" style="left:253px;top:554px"></div>
<div class="mi" style="top:570px">实时上色(N)</div>
<div class="arr" style="left:253px;top:576px"></div>
<div class="mi" style="top:592px">图像描摹</div>
<div class="arr" style="left:253px;top:598px"></div>
<div class="mi" style="top:614px">文本绕排(W)</div>
<div class="arr" style="left:253px;top:620px"></div>
<div class="mi" style="top:636px">Line 和 Sketch 图稿</div>
<div class="arr" style="left:253px;top:642px"></div>
<div class="sep" style="left:29px;top:661px;width:240px"></div>
<div class="mi" style="top:666px">剪切蒙版(M)</div>
<div class="arr" style="left:253px;top:672px"></div>
<div class="mi" style="top:688px">复合路径(O)</div>
<div class="arr" style="left:253px;top:694px"></div>
<div class="mi" style="top:710px">画板(A)</div>
<div class="arr" style="left:253px;top:716px"></div>
<div class="mi" style="top:732px">图表(R)</div>
<div class="arr" style="left:253px;top:738px"></div>
</div>
<div class="menu" style="left:420px;top:531px;width:261px;height:182px">
<div class="a" style="left:29px;top:0;width:1px;height:180px;background:#e4e4e4;border-right:1px solid #f9f9f9"></div>
<div class="mi" style="left:34px;top:0px">建立(M)</div>
<div class="sc" style="right:21px;top:0px">Alt+Ctrl+B</div>
<div class="mi dis" style="left:34px;top:22px">释放(R)</div>
<div class="sc dis" style="right:21px;top:22px">Alt+Shift+Ctrl+B</div>
<div class="sep" style="left:30px;top:48px;width:229px"></div>
<div class="mi" style="left:34px;top:52px">混合选项(O)...</div>
<div class="sep" style="left:30px;top:78px;width:229px"></div>
<div class="mi dis" style="left:34px;top:82px">扩展(E)</div>
<div class="sep" style="left:30px;top:108px;width:229px"></div>
<div class="mi dis" style="left:34px;top:112px">替换混合轴(S)</div>
<div class="mi dis" style="left:34px;top:134px">反向混合轴(V)</div>
<div class="mi dis" style="left:34px;top:156px">反向堆叠(F)</div>
</div>
<div class="a" style="left:1228px;top:147px;width:232px;height:146px;background:#535353;border:1px solid #3a3a3a;border-top:2px solid #3a3a3a;box-shadow:0 0 2px rgba(0,0,0,0.4)"></div>
<div class="a" style="left:1229px;top:149px;width:230px;height:28px;background:#474747;"></div>
<div class="a" style="left:1229px;top:149px;width:48px;height:29px;background:#535353;"></div>
<div class="a" style="left:1277px;top:149px;width:78px;height:28px;background:#4c4c4c;border-right:1px solid #434343"></div>
<div class="t" style="left:1233px;top:157px;font-size:12px;color:#f0f0f0;"><svg class=ud width=7 height=10 viewBox='0 0 7 10'><path d='M1 4 L3.5 1.2 L6 4 M1 6 L3.5 8.8 L6 6' stroke='#e0e0e0' stroke-width='1.2' fill='none'/></svg>对齐</div>
<div class="t" style="left:1287px;top:157px;font-size:12px;color:#bdbdbd;">路径查找器</div>
<svg style="left:1417px;top:160px;" width="12" height="9" viewBox="0 0 12 9"><path d="M1.5 1 L5 4.5 L1.5 8 M6.5 1 L10 4.5 L6.5 8" stroke="#e0e0e0" stroke-width="1.5" fill="none"/></svg>
<div class="a" style="left:1435px;top:157px;width:1px;height:14px;background:#a0a0a0;"></div>
<svg style="left:1442px;top:159px;" width="13" height="10" viewBox="0 0 13 10"><rect x="0" y="1" width="13" height="1.6" fill="#d0d0d0"/><rect x="0" y="4.3" width="13" height="1.6" fill="#d0d0d0"/><rect x="0" y="7.6" width="13" height="1.6" fill="#d0d0d0"/></svg>
<div class="t" style="left:1234px;top:185px;font-size:12px;color:#c8c8c8;">对齐对象 :</div>
<svg style="left:1238px;top:206px;" width="20" height="20" viewBox="0 0 20 20"><rect x="1" y="0" width="1" height="20" fill="#cfcfcf"/><rect x="3" y="3" width="8" height="6" fill="#cfcfcf"/><rect x="3" y="11" width="13" height="6" fill="#cfcfcf"/></svg>
<svg style="left:1273px;top:206px;" width="20" height="20" viewBox="0 0 20 20"><rect x="9" y="0" width="1" height="20" fill="#cfcfcf"/><rect x="5" y="3" width="9" height="6" fill="#cfcfcf"/><rect x="3" y="11" width="13" height="6" fill="#cfcfcf"/></svg>
<svg style="left:1310px;top:206px;" width="20" height="20" viewBox="0 0 20 20"><rect x="17" y="0" width="1" height="20" fill="#cfcfcf"/><rect x="8" y="3" width="8" height="6" fill="#cfcfcf"/><rect x="3" y="11" width="13" height="6" fill="#cfcfcf"/></svg>
<svg style="left:1360px;top:206px;" width="20" height="20" viewBox="0 0 20 20"><rect x="0" y="1" width="19" height="1" fill="#cfcfcf"/><rect x="3" y="3" width="6" height="14" fill="#cfcfcf"/><rect x="10" y="3" width="6" height="8" fill="#cfcfcf"/></svg>
<svg style="left:1396px;top:206px;" width="20" height="20" viewBox="0 0 20 20"><rect x="0" y="8" width="19" height="1" fill="#cfcfcf"/><rect x="3" y="2" width="6" height="13" fill="#cfcfcf"/><rect x="10" y="4" width="6" height="9" fill="#cfcfcf"/></svg>
<svg style="left:1432px;top:206px;" width="20" height="20" viewBox="0 0 20 20"><rect x="0" y="16" width="19" height="1" fill="#cfcfcf"/><rect x="3" y="1" width="6" height="14" fill="#cfcfcf"/><rect x="10" y="7" width="6" height="8" fill="#cfcfcf"/></svg>
<div class="a" style="left:1234px;top:235px;width:219px;height:1px;background:#4a4a4a;border-bottom:1px solid #5a5a5a"></div>
<div class="t" style="left:1234px;top:242px;font-size:12px;color:#c8c8c8;">分布对象 :</div>
<svg style="left:1237px;top:263px;" width="20" height="20" viewBox="0 0 20 20"><rect x="0" y="1" width="19" height="1" fill="#cfcfcf"/><rect x="0" y="10" width="19" height="1" fill="#cfcfcf"/><rect x="5" y="3" width="9" height="5" fill="#cfcfcf"/><rect x="3" y="12" width="13" height="6" fill="#cfcfcf"/></svg>
<svg style="left:1274px;top:263px;" width="20" height="20" viewBox="0 0 20 20"><rect x="0" y="4" width="19" height="1" fill="#cfcfcf"/><rect x="0" y="14" width="19" height="1" fill="#cfcfcf"/><rect x="5" y="2" width="9" height="5" fill="#cfcfcf"/><rect x="3" y="11" width="13" height="6" fill="#cfcfcf"/></svg>
<svg style="left:1310px;top:263px;" width="20" height="20" viewBox="0 0 20 20"><rect x="0" y="7" width="19" height="1" fill="#cfcfcf"/><rect x="0" y="17" width="19" height="1" fill="#cfcfcf"/><rect x="5" y="1" width="9" height="5" fill="#cfcfcf"/><rect x="3" y="10" width="13" height="6" fill="#cfcfcf"/></svg>
<svg style="left:1360px;top:263px;" width="20" height="20" viewBox="0 0 20 20"><rect x="1" y="0" width="1" height="19" fill="#cfcfcf"/><rect x="10" y="0" width="1" height="19" fill="#cfcfcf"/><rect x="3" y="3" width="5" height="13" fill="#cfcfcf"/><rect x="12" y="5" width="5" height="9" fill="#cfcfcf"/></svg>
<svg style="left:1396px;top:263px;" width="20" height="20" viewBox="0 0 20 20"><rect x="4" y="0" width="1" height="19" fill="#cfcfcf"/><rect x="14" y="0" width="1" height="19" fill="#cfcfcf"/><rect x="2" y="3" width="5" height="13" fill="#cfcfcf"/><rect x="12" y="5" width="5" height="9" fill="#cfcfcf"/></svg>
<svg style="left:1432px;top:263px;" width="20" height="20" viewBox="0 0 20 20"><rect x="8" y="0" width="1" height="19" fill="#cfcfcf"/><rect x="17" y="0" width="1" height="19" fill="#cfcfcf"/><rect x="2" y="3" width="5" height="13" fill="#cfcfcf"/><rect x="11" y="5" width="5" height="9" fill="#cfcfcf"/></svg>
<div class="a" style="left:157px;top:529px;width:522px;height:30px;background:transparent;border:2.5px solid #bb2029"></div>
<div class="a" style="left:38px;top:350px;width:40px;height:32px;background:transparent;border:2.5px solid #e5242c"></div>
<svg style="left:80px;top:395px;" width="60" height="70" viewBox="0 0 60 70"><defs><filter id="bl"><feGaussianBlur stdDeviation="0.7"/></filter></defs><g filter="url(#bl)"><path d="M10 12 L15.5 8.5 L51.5 60 L49.5 61.5Z" fill="#ee2038"/><ellipse cx="13" cy="12" rx="4" ry="5" transform="rotate(-35 13 12)" fill="#ff1a30"/></g></svg>
<svg style="left:1488px;top:849px;" width="72" height="60" viewBox="0 0 72 60">
<path d="M25 2 C11 2 2 11 2 22 C2 29 5.5 34 11 38 L8.5 46 L18 40.5 C20.5 41.3 23 41.7 25 41.7 C27 41.7 28 41.6 29 41.5 C28.3 39.5 28 37.5 28 35.5 C28 24.5 38 16.5 50 16.5 C51 16.5 52 16.5 52.5 16.6 C49 8 38 2 25 2Z" fill="#eeeeee"/>
<path d="M50 19 C36.5 19 27 27.5 27 37.5 C27 47.5 36.5 55.5 50 55.5 C52.5 55.5 55 55.2 57 54.6 L65 59 L63 52 C67.5 48.5 72 43.5 72 37.5 C72 27.5 62 19 50 19Z" fill="#eeeeee" stroke="#2e2e2e" stroke-width="1.6"/>
<circle cx="17" cy="16" r="3.2" fill="#2e2e2e"/><circle cx="35" cy="16" r="3.2" fill="#2e2e2e"/>
<circle cx="41.5" cy="33.5" r="2.8" fill="#2e2e2e"/><circle cx="55.5" cy="33.5" r="2.8" fill="#2e2e2e"/>
</svg>
<div class="t" style="left:1564px;top:874px;font-size:42px;color:#f6f6f6;line-height:44px;top:859px;-webkit-text-stroke:0.9px #f6f6f6;text-shadow:0 0 1.5px rgba(0,0,0,0.7)">野鹿志</div>
</body></html>
